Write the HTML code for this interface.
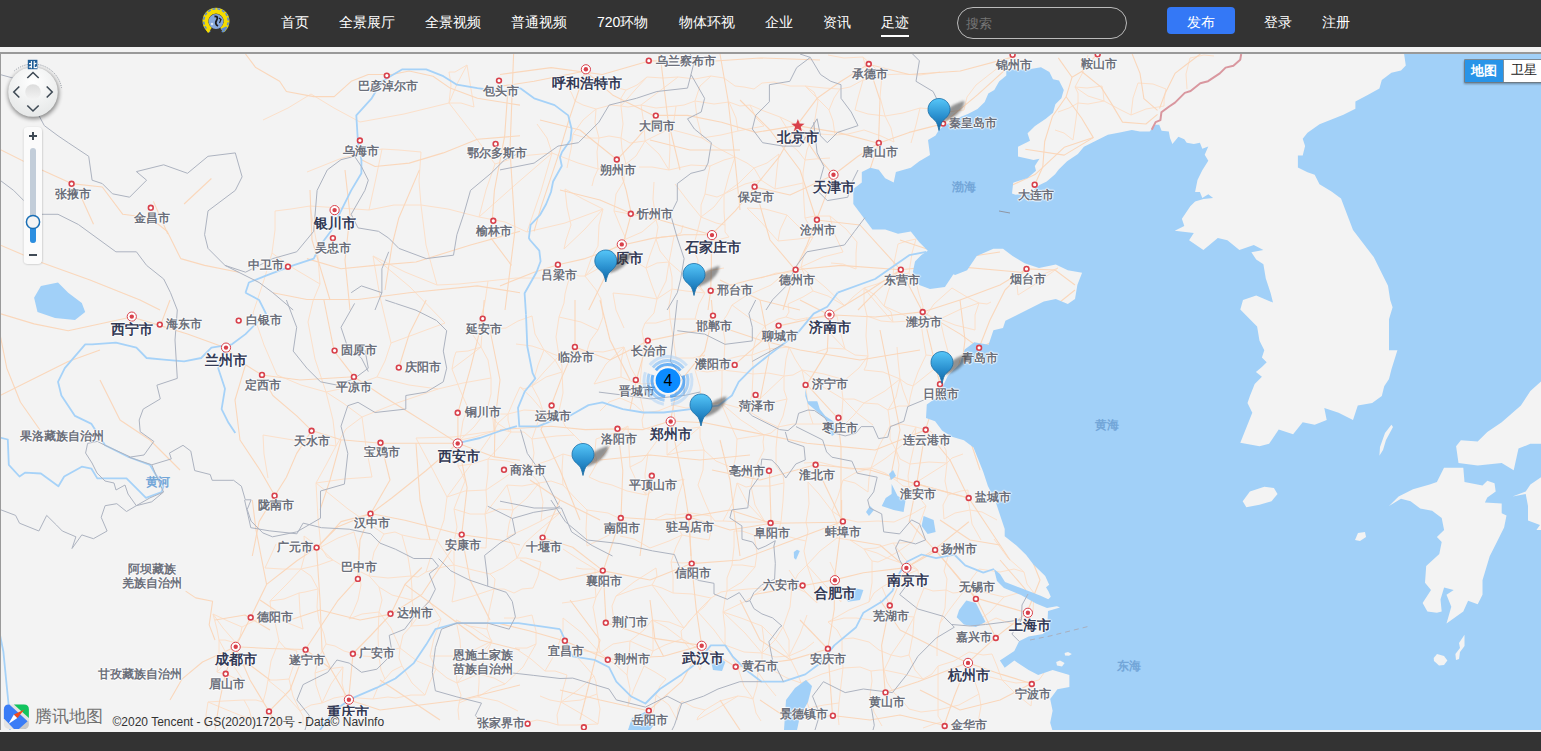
<!DOCTYPE html>
<html><head><meta charset="utf-8"><style>
*{margin:0;padding:0;box-sizing:border-box}
html,body{width:1541px;height:751px;overflow:hidden;background:#333;font-family:"Liberation Sans",sans-serif}
#hdr{position:absolute;left:0;top:0;width:1541px;height:47px;background:#333}
.nav{position:absolute;top:15px;font-size:14px;line-height:14px;color:#fff;white-space:nowrap}
#strip{position:absolute;left:0;top:47px;width:1541px;height:5px;background:#f2f2f2}
#gline{position:absolute;left:0;top:52px;width:1541px;height:2px;background:#999}
#map{position:absolute;left:0;top:54px;width:1541px;height:676px;background:#f3f3f3;overflow:hidden}
#wline{position:absolute;left:0;top:730px;width:1541px;height:2px;background:#f4f4f4}
svg{position:absolute;left:0;top:-54px}
.l{position:absolute;font-size:12px;line-height:12px;font-weight:bold;color:#6c707b;white-space:nowrap;text-shadow:1px 0 1px rgba(255,255,255,.9),-1px 0 1px rgba(255,255,255,.9),0 1px 1px rgba(255,255,255,.9),0 -1px 1px rgba(255,255,255,.9)}
.c{position:absolute;font-size:14px;line-height:14px;font-weight:bold;color:#333a55;white-space:nowrap;text-shadow:1px 0 1px rgba(255,255,255,.9),-1px 0 1px rgba(255,255,255,.9),0 1px 1px rgba(255,255,255,.9),0 -1px 1px rgba(255,255,255,.9)}
.r{position:absolute;font-size:12px;line-height:12px;font-weight:bold;color:#6c707b;white-space:nowrap;text-shadow:1px 0 1px rgba(255,255,255,.9),-1px 0 1px rgba(255,255,255,.9),0 1px 1px rgba(255,255,255,.9),0 -1px 1px rgba(255,255,255,.9)}
.s{position:absolute;font-size:12px;line-height:12px;font-weight:bold;color:#73a6d8;white-space:nowrap}
</style></head><body>
<div id="hdr">

<svg style="position:absolute;left:0;top:0" width="260" height="47" viewBox="0 0 260 47"><path d="M210.2,30.1 A10.6,10.6 0 1 1 221.8,30.1" fill="none" stroke="#f5dc00" stroke-width="5.8"/><path d="M210.2,31.9 A12.3,12.3 0 1 1 221.8,31.9" fill="none" stroke="#5b8ad6" stroke-width="1.6" stroke-dasharray="3 1.8"/><circle cx="216" cy="21.5" r="7.4" fill="#86a8dc"/><path d="M214.5,16.5 Q219,16 216.5,20.5 Q214.5,24 218,26" fill="none" stroke="#1a1a1a" stroke-width="1.8"/><path d="M219,18 L221,19.5 L219.5,23" fill="none" stroke="#222" stroke-width="1.2"/><circle cx="212" cy="24" r="1.3" fill="#d8e4f2"/><path d="M220.5,29 L226,26.5 L225,32 Z" fill="#5b8ad6"/><path d="M205,28 L210.5,30.5 L208,33 Z" fill="#f5dc00"/></svg>
<div class="nav" style="left:281px">首页</div>
<div class="nav" style="left:339px">全景展厅</div>
<div class="nav" style="left:425px">全景视频</div>
<div class="nav" style="left:511px">普通视频</div>
<div class="nav" style="left:597px">720环物</div>
<div class="nav" style="left:679px">物体环视</div>
<div class="nav" style="left:765px">企业</div>
<div class="nav" style="left:823px">资讯</div>
<div class="nav" style="left:881px">足迹</div>
<div class="nav" style="left:1264px">登录</div>
<div class="nav" style="left:1322px">注册</div>
<div style="position:absolute;left:881px;top:35px;width:28px;height:2px;background:#fff"></div>
<div style="position:absolute;left:957px;top:7px;width:170px;height:32px;border:1px solid #bbb;border-radius:16px"></div>
<div style="position:absolute;left:966px;top:17px;font-size:13px;line-height:13px;color:#777">搜索</div>
<div style="position:absolute;left:1167px;top:7px;width:68px;height:27px;background:#3478f6;border-radius:4px"></div>
<div class="nav" style="left:1187px;top:15px">发布</div>
</div><div id="strip"></div><div id="gline"></div>
<div id="map">
<svg width="1541" height="751" viewBox="0 0 1541 751"><g fill="none" stroke="#fce0ca" stroke-width="1" stroke-linejoin="round"><polyline points="213,614 228,621 242,627"/><polyline points="213,614 217,629 219,640"/><polyline points="213,614 223,628 236,643"/><polyline points="219,640 225,640 236,643"/><polyline points="219,640 219,656 217,672"/><polyline points="219,640 231,662 245,683"/><polyline points="217,672 228,675 245,683"/><polyline points="217,672 228,660 236,643"/><polyline points="208,702 224,701 244,700"/><polyline points="208,702 206,715 207,728"/><polyline points="208,702 232,712 252,720"/><polyline points="242,627 256,620 274,617"/><polyline points="242,627 240,637 236,643"/><polyline points="244,700 256,700 263,702"/><polyline points="244,700 249,709 252,720"/><polyline points="263,120 288,108 311,94"/><polyline points="275,211 291,209 310,206"/><polyline points="275,211 275,230 272,253"/><polyline points="272,253 293,268 320,284"/><polyline points="272,253 264,280 253,313"/><polyline points="253,313 264,345 277,375"/><polyline points="277,375 301,385 326,392"/><polyline points="263,435 299,441 336,446"/><polyline points="263,435 264,454 268,478"/><polyline points="276,544 272,553 265,568"/><polyline points="265,568 282,569 301,569"/><polyline points="270,601 284,599 299,593"/><polyline points="270,601 271,610 274,617"/><polyline points="270,601 287,584 301,569"/><polyline points="274,617 288,623 303,629"/><polyline points="274,617 276,627 279,641"/><polyline points="279,641 285,648 297,651"/><polyline points="279,641 271,661 268,680"/><polyline points="268,680 277,680 289,679"/><polyline points="268,680 266,691 263,702"/><polyline points="268,680 284,693 300,711"/><polyline points="304,536 305,554 301,569"/><polyline points="304,536 320,548 333,560"/><polyline points="301,569 319,565 333,560"/><polyline points="301,569 311,576 318,589"/><polyline points="299,593 305,592 318,589"/><polyline points="299,593 300,613 303,629"/><polyline points="297,651 294,664 289,679"/><polyline points="289,679 293,696 300,711"/><polyline points="300,711 311,705 322,703"/><polyline points="300,711 303,716 303,725"/><polyline points="311,94 334,108 360,122"/><polyline points="307,172 342,158 382,149"/><polyline points="310,206 340,208 369,210"/><polyline points="310,206 317,245 320,284"/><polyline points="320,284 313,301 308,322"/><polyline points="308,322 315,359 326,392"/><polyline points="326,392 349,387 377,377"/><polyline points="326,392 333,420 336,446"/><polyline points="326,392 343,403 362,417"/><polyline points="336,446 346,429 362,417"/><polyline points="336,446 326,465 316,483"/><polyline points="316,483 344,479 372,477"/><polyline points="316,483 318,518 321,547"/><polyline points="316,483 348,509 384,534"/><polyline points="321,547 338,538 354,532"/><polyline points="321,547 327,557 333,560"/><polyline points="333,560 346,568 359,572"/><polyline points="318,589 317,607 319,621"/><polyline points="319,621 324,634 326,644"/><polyline points="326,644 335,646 344,651"/><polyline points="326,644 319,657 315,673"/><polyline points="315,673 327,669 343,667"/><polyline points="315,673 316,685 322,703"/><polyline points="322,703 334,698 345,696"/><polyline points="322,703 331,684 343,667"/><polyline points="354,532 359,551 359,572"/><polyline points="359,572 361,572 369,576"/><polyline points="359,572 361,585 358,600"/><polyline points="358,600 353,612 349,619"/><polyline points="349,619 362,614 379,612"/><polyline points="344,651 362,656 379,657"/><polyline points="343,667 342,683 345,696"/><polyline points="345,696 358,698 373,699"/><polyline points="360,122 404,114 449,103"/><polyline points="382,149 399,150 421,152"/><polyline points="382,149 376,178 369,210"/><polyline points="369,210 394,205 421,205"/><polyline points="373,256 405,272 437,285"/><polyline points="373,256 380,297 391,343"/><polyline points="373,256 410,287 445,323"/><polyline points="391,343 418,333 445,323"/><polyline points="391,343 385,361 377,377"/><polyline points="377,377 409,385 438,389"/><polyline points="362,417 366,447 372,477"/><polyline points="362,417 397,403 438,389"/><polyline points="384,534 395,532 402,535"/><polyline points="384,534 374,552 369,576"/><polyline points="369,576 388,578 411,576"/><polyline points="369,576 372,579 379,587"/><polyline points="379,587 392,595 412,600"/><polyline points="379,587 382,600 379,612"/><polyline points="379,612 378,637 379,657"/><polyline points="379,612 391,628 400,648"/><polyline points="379,657 391,650 400,648"/><polyline points="379,657 381,670 385,679"/><polyline points="385,679 392,671 402,666"/><polyline points="385,679 378,687 373,699"/><polyline points="373,699 388,697 396,698"/><polyline points="402,535 421,539 437,540"/><polyline points="402,535 408,557 411,576"/><polyline points="411,576 418,577 426,572"/><polyline points="411,576 412,589 412,600"/><polyline points="412,600 414,612 411,626"/><polyline points="411,626 428,625 441,619"/><polyline points="411,626 403,635 400,648"/><polyline points="411,626 422,611 429,600"/><polyline points="400,648 399,658 402,666"/><polyline points="400,648 417,661 436,669"/><polyline points="402,666 412,683 425,695"/><polyline points="396,698 411,695 425,695"/><polyline points="449,72 455,72 467,65"/><polyline points="449,72 451,85 449,103"/><polyline points="449,103 461,103 474,107"/><polyline points="449,103 473,134 495,164"/><polyline points="449,103 457,84 467,65"/><polyline points="421,152 419,181 421,205"/><polyline points="421,205 448,209 479,217"/><polyline points="421,205 426,245 437,285"/><polyline points="437,285 459,284 488,281"/><polyline points="438,389 463,383 491,378"/><polyline points="416,438 453,437 494,431"/><polyline points="416,438 433,470 447,497"/><polyline points="447,497 465,491 486,490"/><polyline points="447,497 444,520 437,540"/><polyline points="447,497 472,463 494,431"/><polyline points="437,540 430,559 426,572"/><polyline points="437,540 447,555 454,565"/><polyline points="426,572 443,567 454,565"/><polyline points="429,600 435,610 441,619"/><polyline points="441,619 434,638 430,656"/><polyline points="430,656 447,656 461,656"/><polyline points="430,656 432,660 436,669"/><polyline points="436,669 447,678 457,683"/><polyline points="436,669 429,684 425,695"/><polyline points="468,327 473,328 479,325"/><polyline points="468,327 473,335 481,347"/><polyline points="456,352 468,351 481,347"/><polyline points="456,352 454,358 452,369"/><polyline points="452,369 460,390 468,408"/><polyline points="452,369 468,357 481,347"/><polyline points="468,408 476,408 487,410"/><polyline points="468,408 463,421 460,440"/><polyline points="460,440 475,437 494,431"/><polyline points="460,440 458,452 458,466"/><polyline points="460,440 474,427 487,410"/><polyline points="458,466 472,464 488,459"/><polyline points="458,466 461,471 465,481"/><polyline points="465,481 459,496 454,509"/><polyline points="454,509 470,514 485,514"/><polyline points="454,509 457,527 454,542"/><polyline points="454,542 467,547 486,548"/><polyline points="454,542 454,554 454,565"/><polyline points="454,565 473,570 490,574"/><polyline points="454,565 455,583 452,602"/><polyline points="452,602 473,596 494,589"/><polyline points="456,620 469,626 487,629"/><polyline points="456,620 460,640 461,656"/><polyline points="456,620 473,628 492,641"/><polyline points="461,656 474,650 492,641"/><polyline points="461,656 456,670 457,683"/><polyline points="457,683 469,678 479,674"/><polyline points="457,683 461,695 459,703"/><polyline points="457,683 474,662 492,641"/><polyline points="459,703 471,698 478,697"/><polyline points="459,703 458,710 459,720"/><polyline points="467,65 470,83 474,107"/><polyline points="495,164 521,156 552,153"/><polyline points="495,164 486,190 479,217"/><polyline points="479,217 505,222 527,232"/><polyline points="479,217 515,185 552,153"/><polyline points="488,281 516,278 543,278"/><polyline points="488,281 485,302 479,325"/><polyline points="479,325 492,329 506,328"/><polyline points="479,325 482,333 481,347"/><polyline points="481,347 488,360 491,378"/><polyline points="491,378 491,394 487,410"/><polyline points="487,410 496,414 508,414"/><polyline points="487,410 493,419 494,431"/><polyline points="487,410 497,423 511,432"/><polyline points="494,431 503,430 511,432"/><polyline points="494,431 498,423 508,414"/><polyline points="488,459 507,461 522,465"/><polyline points="488,459 488,473 486,490"/><polyline points="488,459 502,444 511,432"/><polyline points="486,490 487,505 485,514"/><polyline points="486,490 504,478 522,465"/><polyline points="485,514 499,509 513,510"/><polyline points="485,514 487,531 486,548"/><polyline points="485,514 498,497 507,485"/><polyline points="490,574 503,568 517,558"/><polyline points="490,574 495,579 494,589"/><polyline points="494,589 504,589 514,593"/><polyline points="494,589 489,612 487,629"/><polyline points="487,629 490,638 492,641"/><polyline points="492,641 485,657 479,674"/><polyline points="479,674 494,678 505,684"/><polyline points="479,674 479,683 478,697"/><polyline points="478,697 498,701 518,711"/><polyline points="478,697 492,688 505,684"/><polyline points="506,328 518,321 532,316"/><polyline points="516,344 532,346 544,350"/><polyline points="520,387 524,389 532,386"/><polyline points="520,387 514,400 508,414"/><polyline points="520,387 531,397 543,411"/><polyline points="508,414 524,410 543,411"/><polyline points="508,414 508,420 511,432"/><polyline points="511,432 524,432 532,439"/><polyline points="522,465 528,464 532,466"/><polyline points="522,465 529,471 539,483"/><polyline points="507,485 522,486 539,483"/><polyline points="507,485 510,496 513,510"/><polyline points="513,510 509,524 507,537"/><polyline points="513,510 527,498 539,483"/><polyline points="507,537 514,547 517,558"/><polyline points="507,537 527,528 541,521"/><polyline points="517,558 526,558 541,562"/><polyline points="517,558 525,543 536,533"/><polyline points="514,593 522,589 533,588"/><polyline points="504,618 518,618 532,615"/><polyline points="515,648 527,648 536,644"/><polyline points="515,648 531,659 545,671"/><polyline points="505,684 523,667 536,644"/><polyline points="506,725 521,724 537,720"/><polyline points="537,124 547,138 552,153"/><polyline points="552,153 578,163 598,169"/><polyline points="552,153 541,191 527,232"/><polyline points="527,232 565,223 603,209"/><polyline points="532,316 535,334 544,350"/><polyline points="544,350 553,354 559,356"/><polyline points="544,350 538,365 532,386"/><polyline points="544,350 555,360 562,372"/><polyline points="532,386 546,377 562,372"/><polyline points="532,386 539,399 543,411"/><polyline points="532,386 544,372 559,356"/><polyline points="543,411 552,413 559,411"/><polyline points="543,411 538,422 532,439"/><polyline points="532,439 556,436 574,435"/><polyline points="532,439 534,453 532,466"/><polyline points="532,466 550,460 563,454"/><polyline points="539,483 551,481 563,485"/><polyline points="539,483 543,502 541,521"/><polyline points="541,521 548,517 561,512"/><polyline points="536,533 549,522 561,512"/><polyline points="541,562 538,576 533,588"/><polyline points="532,615 536,631 536,644"/><polyline points="545,671 555,671 567,675"/><polyline points="545,671 552,659 558,646"/><polyline points="540,696 550,700 561,702"/><polyline points="537,720 548,722 558,725"/><polyline points="561,81 571,92 575,101"/><polyline points="575,101 583,105 596,109"/><polyline points="573,134 586,138 599,138"/><polyline points="573,134 571,149 567,168"/><polyline points="573,134 583,120 596,109"/><polyline points="565,189 567,207 571,225"/><polyline points="565,189 583,199 603,209"/><polyline points="571,225 566,240 564,249"/><polyline points="564,249 585,229 603,209"/><polyline points="571,273 579,276 585,276"/><polyline points="571,273 567,286 565,294"/><polyline points="565,294 564,303 559,317"/><polyline points="559,317 581,322 598,330"/><polyline points="559,317 556,337 559,356"/><polyline points="559,356 575,351 587,351"/><polyline points="559,356 562,366 562,372"/><polyline points="562,372 563,393 559,411"/><polyline points="559,411 565,426 574,435"/><polyline points="574,435 585,446 597,463"/><polyline points="563,454 582,459 597,463"/><polyline points="563,454 562,470 563,485"/><polyline points="563,485 576,499 587,510"/><polyline points="563,549 580,560 595,569"/><polyline points="576,568 583,569 595,569"/><polyline points="562,603 577,601 596,597"/><polyline points="563,618 563,631 558,646"/><polyline points="563,618 582,633 600,653"/><polyline points="558,646 578,650 600,653"/><polyline points="558,646 578,658 594,676"/><polyline points="567,675 563,689 561,702"/><polyline points="561,702 581,700 597,694"/><polyline points="561,702 557,715 558,725"/><polyline points="561,702 580,713 598,724"/><polyline points="561,702 578,690 594,676"/><polyline points="558,725 577,725 598,724"/><polyline points="590,76 610,86 626,90"/><polyline points="596,109 611,105 621,106"/><polyline points="596,109 595,123 599,138"/><polyline points="599,138 609,136 621,138"/><polyline points="599,138 597,152 598,169"/><polyline points="598,169 610,168 626,164"/><polyline points="598,169 594,178 592,186"/><polyline points="603,209 599,225 598,246"/><polyline points="598,246 591,259 585,276"/><polyline points="585,276 601,267 622,261"/><polyline points="585,276 596,290 601,299"/><polyline points="585,276 603,256 626,239"/><polyline points="601,299 603,317 598,330"/><polyline points="598,330 590,341 587,351"/><polyline points="587,351 603,352 624,347"/><polyline points="594,384 609,380 621,377"/><polyline points="594,384 606,364 624,347"/><polyline points="600,411 609,402 620,398"/><polyline points="596,439 614,433 628,426"/><polyline points="596,439 595,452 597,463"/><polyline points="597,463 592,472 589,477"/><polyline points="597,463 613,442 628,426"/><polyline points="589,477 600,482 612,485"/><polyline points="587,510 608,513 627,522"/><polyline points="587,510 586,529 587,546"/><polyline points="587,546 609,535 627,522"/><polyline points="595,569 604,575 616,575"/><polyline points="595,569 595,585 596,597"/><polyline points="596,597 593,607 594,612"/><polyline points="596,597 603,585 616,575"/><polyline points="594,612 598,635 600,653"/><polyline points="600,653 613,644 630,641"/><polyline points="600,653 616,665 627,675"/><polyline points="594,676 596,682 597,694"/><polyline points="597,694 600,709 598,724"/><polyline points="626,90 637,85 647,77"/><polyline points="626,90 621,98 621,106"/><polyline points="621,106 628,107 641,105"/><polyline points="621,106 623,124 621,138"/><polyline points="621,106 635,90 647,77"/><polyline points="621,138 630,143 645,141"/><polyline points="621,138 622,149 626,164"/><polyline points="626,164 624,171 624,181"/><polyline points="626,164 636,156 645,141"/><polyline points="624,181 616,194 614,211"/><polyline points="614,211 635,215 656,220"/><polyline points="614,211 621,228 626,239"/><polyline points="626,239 642,232 656,220"/><polyline points="622,261 636,262 646,268"/><polyline points="613,293 634,295 657,299"/><polyline points="613,293 616,310 624,328"/><polyline points="624,347 621,362 621,377"/><polyline points="624,347 631,368 640,384"/><polyline points="621,377 633,382 640,384"/><polyline points="620,398 634,404 644,413"/><polyline points="628,426 629,448 630,467"/><polyline points="630,467 642,461 648,453"/><polyline points="630,467 636,480 646,495"/><polyline points="612,485 627,491 646,495"/><polyline points="620,536 634,539 650,548"/><polyline points="616,596 635,589 652,585"/><polyline points="616,596 612,606 614,621"/><polyline points="616,596 634,582 656,568"/><polyline points="630,641 639,645 653,651"/><polyline points="630,641 629,658 627,675"/><polyline points="630,641 644,630 652,620"/><polyline points="627,675 630,689 628,706"/><polyline points="628,706 634,689 644,666"/><polyline points="647,77 663,78 678,77"/><polyline points="641,105 656,108 676,106"/><polyline points="641,105 644,124 645,141"/><polyline points="641,105 657,93 678,77"/><polyline points="645,141 659,134 669,129"/><polyline points="645,141 659,154 669,170"/><polyline points="639,167 652,167 669,170"/><polyline points="654,182 653,199 656,220"/><polyline points="656,220 658,227 656,239"/><polyline points="656,239 662,237 674,236"/><polyline points="656,239 650,255 646,268"/><polyline points="656,239 660,251 669,262"/><polyline points="646,268 657,263 669,262"/><polyline points="646,268 651,283 657,299"/><polyline points="657,299 663,295 672,289"/><polyline points="657,299 654,313 645,323"/><polyline points="657,299 666,281 669,262"/><polyline points="645,323 656,323 670,319"/><polyline points="645,323 642,331 644,342"/><polyline points="644,342 642,362 640,384"/><polyline points="640,384 658,383 680,376"/><polyline points="640,384 640,396 644,413"/><polyline points="644,413 658,411 673,405"/><polyline points="644,413 642,420 643,428"/><polyline points="643,428 660,431 673,429"/><polyline points="648,453 645,474 646,495"/><polyline points="648,453 659,438 673,429"/><polyline points="646,495 663,485 684,479"/><polyline points="655,519 666,514 675,515"/><polyline points="650,548 669,541 682,535"/><polyline points="656,568 657,576 652,585"/><polyline points="652,585 662,588 673,593"/><polyline points="652,585 667,605 684,628"/><polyline points="652,620 669,622 684,628"/><polyline points="652,620 653,637 653,651"/><polyline points="652,620 666,627 682,639"/><polyline points="653,651 665,645 682,639"/><polyline points="653,651 651,656 644,666"/><polyline points="644,666 655,672 666,679"/><polyline points="656,695 654,710 647,726"/><polyline points="656,695 669,705 677,720"/><polyline points="656,695 660,686 666,679"/><polyline points="678,77 695,79 711,76"/><polyline points="676,106 684,105 695,101"/><polyline points="676,106 674,120 669,129"/><polyline points="669,129 688,134 702,138"/><polyline points="669,129 670,148 669,170"/><polyline points="669,170 691,165 710,166"/><polyline points="675,184 688,201 701,217"/><polyline points="683,225 681,233 674,236"/><polyline points="674,236 671,252 669,262"/><polyline points="669,262 672,277 672,289"/><polyline points="669,262 685,276 705,293"/><polyline points="672,289 686,291 705,293"/><polyline points="672,289 669,305 670,319"/><polyline points="670,319 684,319 695,319"/><polyline points="670,319 673,336 676,358"/><polyline points="676,358 693,358 705,355"/><polyline points="673,405 686,408 702,407"/><polyline points="673,405 675,419 673,429"/><polyline points="673,429 686,429 700,427"/><polyline points="673,429 667,439 667,455"/><polyline points="667,455 684,451 704,450"/><polyline points="667,455 681,443 700,427"/><polyline points="684,479 678,497 675,515"/><polyline points="675,515 691,513 711,516"/><polyline points="675,515 676,523 682,535"/><polyline points="682,535 697,538 709,540"/><polyline points="682,535 676,547 671,562"/><polyline points="671,562 682,563 697,562"/><polyline points="671,562 673,576 673,593"/><polyline points="673,593 692,594 711,598"/><polyline points="684,628 689,621 698,612"/><polyline points="684,628 681,631 682,639"/><polyline points="684,628 698,611 711,598"/><polyline points="682,639 692,645 702,651"/><polyline points="682,639 693,653 700,670"/><polyline points="682,701 693,707 705,710"/><polyline points="682,701 678,709 677,720"/><polyline points="711,76 724,78 735,86"/><polyline points="711,76 700,86 695,101"/><polyline points="695,101 714,104 729,102"/><polyline points="695,101 697,118 702,138"/><polyline points="702,138 721,135 738,131"/><polyline points="702,138 716,147 735,157"/><polyline points="710,166 724,160 735,157"/><polyline points="710,166 707,181 705,194"/><polyline points="705,194 717,197 724,194"/><polyline points="705,194 701,205 701,217"/><polyline points="701,217 716,223 725,225"/><polyline points="701,217 697,233 693,248"/><polyline points="701,217 714,207 724,194"/><polyline points="693,248 709,242 729,237"/><polyline points="693,248 698,260 697,278"/><polyline points="697,278 708,271 724,268"/><polyline points="697,278 701,288 705,293"/><polyline points="705,293 699,304 695,319"/><polyline points="695,319 707,322 722,322"/><polyline points="705,355 698,362 695,370"/><polyline points="695,370 707,372 722,370"/><polyline points="695,370 700,387 702,407"/><polyline points="702,407 715,403 721,403"/><polyline points="700,427 700,438 704,450"/><polyline points="704,450 716,461 733,468"/><polyline points="704,450 703,470 698,485"/><polyline points="698,485 704,500 711,516"/><polyline points="711,516 715,521 723,521"/><polyline points="711,516 711,530 709,540"/><polyline points="711,598 721,592 727,591"/><polyline points="711,598 704,607 698,612"/><polyline points="698,612 714,630 725,645"/><polyline points="702,651 703,661 700,670"/><polyline points="705,710 720,701 738,696"/><polyline points="705,710 698,717 697,720"/><polyline points="697,720 715,710 738,696"/><polyline points="735,86 744,87 754,89"/><polyline points="729,102 740,106 750,105"/><polyline points="729,102 736,118 738,131"/><polyline points="738,131 748,129 764,126"/><polyline points="735,157 747,163 754,168"/><polyline points="735,157 729,175 724,194"/><polyline points="724,194 745,184 761,180"/><polyline points="724,194 724,211 725,225"/><polyline points="724,194 739,183 754,168"/><polyline points="725,225 725,232 729,237"/><polyline points="732,305 744,297 753,293"/><polyline points="732,305 727,315 722,322"/><polyline points="732,305 751,319 765,326"/><polyline points="722,322 725,341 724,360"/><polyline points="724,360 740,356 752,355"/><polyline points="724,360 723,367 722,370"/><polyline points="722,370 740,372 753,374"/><polyline points="722,370 722,388 721,403"/><polyline points="721,403 732,406 747,410"/><polyline points="721,403 728,419 737,439"/><polyline points="721,403 741,420 764,435"/><polyline points="737,439 749,437 764,435"/><polyline points="737,439 736,456 733,468"/><polyline points="737,483 746,487 751,486"/><polyline points="737,483 733,502 723,521"/><polyline points="737,483 748,504 765,522"/><polyline points="723,521 744,522 765,522"/><polyline points="734,531 742,531 754,535"/><polyline points="734,531 734,547 732,565"/><polyline points="732,565 742,565 755,567"/><polyline points="732,565 727,578 727,591"/><polyline points="727,591 748,589 764,588"/><polyline points="727,591 725,599 723,612"/><polyline points="727,591 742,582 755,567"/><polyline points="723,612 741,618 762,626"/><polyline points="723,612 725,628 725,645"/><polyline points="723,612 745,633 762,653"/><polyline points="723,612 746,601 764,588"/><polyline points="725,645 744,652 762,653"/><polyline points="725,645 731,655 738,668"/><polyline points="738,668 744,686 753,699"/><polyline points="738,696 746,697 753,699"/><polyline points="754,89 762,83 774,82"/><polyline points="750,105 764,111 780,117"/><polyline points="750,105 756,118 764,126"/><polyline points="754,168 767,163 779,154"/><polyline points="754,168 757,173 761,180"/><polyline points="761,180 767,184 775,189"/><polyline points="747,208 765,209 787,215"/><polyline points="747,208 761,222 778,241"/><polyline points="761,278 776,273 785,273"/><polyline points="753,293 771,285 785,273"/><polyline points="765,326 778,319 786,317"/><polyline points="765,326 756,338 752,355"/><polyline points="752,355 768,349 789,347"/><polyline points="752,355 753,367 753,374"/><polyline points="753,374 768,373 784,376"/><polyline points="753,374 752,395 747,410"/><polyline points="747,410 765,404 787,399"/><polyline points="747,410 763,420 778,427"/><polyline points="747,410 765,394 784,376"/><polyline points="764,435 771,433 778,427"/><polyline points="764,435 763,442 764,450"/><polyline points="764,450 756,466 751,486"/><polyline points="751,486 770,486 784,483"/><polyline points="751,486 755,505 765,522"/><polyline points="765,522 774,521 781,522"/><polyline points="754,535 767,534 783,535"/><polyline points="754,535 757,553 755,567"/><polyline points="764,588 779,585 792,586"/><polyline points="762,626 764,641 762,653"/><polyline points="762,626 777,641 789,656"/><polyline points="762,653 775,657 789,656"/><polyline points="762,653 762,660 758,672"/><polyline points="762,653 775,640 783,627"/><polyline points="758,672 757,686 753,699"/><polyline points="758,672 767,685 776,696"/><polyline points="753,699 756,713 761,721"/><polyline points="774,82 790,86 805,86"/><polyline points="780,117 788,130 790,144"/><polyline points="780,117 797,125 812,137"/><polyline points="790,144 804,141 812,137"/><polyline points="790,144 798,151 805,160"/><polyline points="779,154 777,169 775,189"/><polyline points="775,189 789,186 803,183"/><polyline points="787,215 780,230 778,241"/><polyline points="787,215 798,226 813,237"/><polyline points="778,241 798,239 813,237"/><polyline points="785,273 795,271 801,267"/><polyline points="788,304 803,297 813,291"/><polyline points="788,304 789,312 786,317"/><polyline points="786,317 796,320 806,318"/><polyline points="789,347 786,359 784,376"/><polyline points="789,347 795,359 802,370"/><polyline points="784,376 793,375 802,370"/><polyline points="784,376 784,390 787,399"/><polyline points="787,399 783,416 778,427"/><polyline points="778,427 793,424 813,424"/><polyline points="778,427 776,448 776,466"/><polyline points="776,466 783,475 784,483"/><polyline points="784,483 783,501 781,522"/><polyline points="781,522 779,529 783,535"/><polyline points="783,535 797,539 806,541"/><polyline points="789,570 800,586 817,603"/><polyline points="792,586 805,592 817,603"/><polyline points="792,586 790,607 783,627"/><polyline points="792,586 798,574 807,565"/><polyline points="783,627 789,640 789,656"/><polyline points="789,656 805,649 814,642"/><polyline points="789,656 797,672 801,683"/><polyline points="789,656 800,634 807,615"/><polyline points="774,671 787,678 801,683"/><polyline points="805,86 824,88 840,89"/><polyline points="805,86 814,92 818,101"/><polyline points="805,86 815,96 829,110"/><polyline points="818,101 815,119 812,137"/><polyline points="812,137 820,134 835,135"/><polyline points="812,137 807,150 805,160"/><polyline points="805,160 815,159 830,158"/><polyline points="805,160 803,173 803,183"/><polyline points="803,183 804,203 805,218"/><polyline points="805,218 815,216 830,216"/><polyline points="805,218 810,227 813,237"/><polyline points="813,237 805,251 801,267"/><polyline points="801,267 805,276 813,291"/><polyline points="801,267 825,287 845,306"/><polyline points="801,267 823,257 843,252"/><polyline points="813,291 828,296 845,306"/><polyline points="806,318 823,317 837,316"/><polyline points="806,318 828,331 845,349"/><polyline points="816,352 829,348 845,349"/><polyline points="802,370 824,374 845,380"/><polyline points="802,370 806,388 808,406"/><polyline points="802,370 820,385 843,399"/><polyline points="808,406 810,415 813,424"/><polyline points="813,424 829,424 842,427"/><polyline points="804,463 819,462 835,466"/><polyline points="808,482 809,504 806,522"/><polyline points="808,482 819,494 832,511"/><polyline points="806,522 808,531 806,541"/><polyline points="806,541 804,551 807,565"/><polyline points="807,565 814,586 817,603"/><polyline points="807,565 824,584 841,602"/><polyline points="807,565 820,551 837,538"/><polyline points="801,683 822,674 843,668"/><polyline points="801,683 805,696 809,708"/><polyline points="809,708 824,705 839,703"/><polyline points="828,55 844,58 863,57"/><polyline points="840,89 850,87 863,80"/><polyline points="840,89 834,98 829,110"/><polyline points="829,110 833,121 835,135"/><polyline points="835,135 848,134 864,130"/><polyline points="830,216 834,233 843,252"/><polyline points="830,216 846,229 857,242"/><polyline points="831,263 843,264 856,269"/><polyline points="845,306 853,297 864,288"/><polyline points="837,316 840,331 845,349"/><polyline points="845,349 855,355 868,356"/><polyline points="845,380 842,391 843,399"/><polyline points="845,380 859,368 868,356"/><polyline points="843,399 854,399 864,403"/><polyline points="843,399 842,412 842,427"/><polyline points="843,399 857,413 873,425"/><polyline points="842,427 854,415 864,403"/><polyline points="835,466 851,469 871,468"/><polyline points="843,480 855,483 868,492"/><polyline points="843,480 838,496 832,511"/><polyline points="843,480 855,473 871,468"/><polyline points="832,511 844,519 858,522"/><polyline points="832,511 837,523 837,538"/><polyline points="837,538 850,540 864,549"/><polyline points="830,562 838,579 841,602"/><polyline points="828,622 844,618 856,618"/><polyline points="828,622 837,630 842,639"/><polyline points="828,622 849,610 869,602"/><polyline points="842,639 853,638 869,642"/><polyline points="842,639 842,654 843,668"/><polyline points="843,668 860,667 871,671"/><polyline points="843,668 841,685 839,703"/><polyline points="839,703 838,715 839,725"/><polyline points="863,57 866,68 863,80"/><polyline points="863,57 873,66 882,75"/><polyline points="863,80 872,79 882,75"/><polyline points="863,80 858,98 855,110"/><polyline points="855,110 868,114 885,116"/><polyline points="864,130 881,136 894,142"/><polyline points="857,242 856,253 856,269"/><polyline points="864,288 875,295 884,306"/><polyline points="864,288 864,303 867,316"/><polyline points="864,288 879,306 893,322"/><polyline points="864,288 877,284 893,277"/><polyline points="867,316 881,321 893,322"/><polyline points="867,316 866,336 868,356"/><polyline points="868,356 866,366 864,370"/><polyline points="864,370 883,372 900,379"/><polyline points="864,403 878,404 888,410"/><polyline points="864,403 885,391 900,379"/><polyline points="871,468 886,458 896,450"/><polyline points="871,468 869,478 868,492"/><polyline points="871,468 885,473 897,481"/><polyline points="871,468 879,446 890,426"/><polyline points="858,522 878,521 894,522"/><polyline points="864,549 876,548 893,543"/><polyline points="864,549 869,557 872,561"/><polyline points="864,549 877,553 887,558"/><polyline points="872,561 878,562 887,558"/><polyline points="872,561 872,583 869,602"/><polyline points="869,602 874,593 882,587"/><polyline points="856,618 872,620 893,620"/><polyline points="869,642 879,650 891,655"/><polyline points="871,671 880,670 884,670"/><polyline points="871,671 872,681 870,695"/><polyline points="870,695 874,712 882,726"/><polyline points="882,75 901,74 920,75"/><polyline points="882,75 880,97 885,116"/><polyline points="885,116 903,113 920,108"/><polyline points="885,116 891,128 894,142"/><polyline points="898,244 907,241 916,239"/><polyline points="898,244 894,263 893,277"/><polyline points="893,277 899,275 909,273"/><polyline points="893,277 888,292 884,306"/><polyline points="884,306 891,312 893,322"/><polyline points="884,306 904,315 921,323"/><polyline points="893,322 909,321 921,323"/><polyline points="897,347 898,360 900,379"/><polyline points="900,379 907,384 913,386"/><polyline points="900,379 896,397 888,410"/><polyline points="900,379 903,390 909,406"/><polyline points="888,410 899,406 909,406"/><polyline points="888,410 889,417 890,426"/><polyline points="890,426 901,424 916,427"/><polyline points="890,426 890,439 896,450"/><polyline points="896,450 900,459 910,464"/><polyline points="896,450 899,465 897,481"/><polyline points="896,450 909,439 916,427"/><polyline points="897,481 903,486 909,487"/><polyline points="894,522 912,514 926,506"/><polyline points="893,543 901,543 912,542"/><polyline points="893,543 905,559 918,570"/><polyline points="887,558 904,564 918,570"/><polyline points="887,558 899,551 912,542"/><polyline points="882,587 889,604 893,620"/><polyline points="882,587 900,577 918,570"/><polyline points="893,620 903,616 914,617"/><polyline points="891,655 901,657 909,655"/><polyline points="891,655 889,660 884,670"/><polyline points="891,655 904,636 914,617"/><polyline points="884,670 903,674 923,679"/><polyline points="884,670 887,682 894,693"/><polyline points="894,693 901,699 909,709"/><polyline points="920,75 927,74 940,72"/><polyline points="920,108 933,109 942,113"/><polyline points="920,108 916,125 911,143"/><polyline points="916,239 912,253 909,273"/><polyline points="909,273 916,282 919,294"/><polyline points="919,294 923,306 921,323"/><polyline points="921,323 923,337 926,355"/><polyline points="921,323 934,304 952,288"/><polyline points="926,355 935,356 950,359"/><polyline points="926,355 918,372 913,386"/><polyline points="913,386 910,398 909,406"/><polyline points="913,386 933,370 950,359"/><polyline points="916,427 930,431 940,440"/><polyline points="916,427 914,446 910,464"/><polyline points="910,464 929,462 947,463"/><polyline points="910,464 908,476 909,487"/><polyline points="909,487 919,497 926,506"/><polyline points="909,487 928,475 947,463"/><polyline points="926,506 919,526 912,542"/><polyline points="918,570 919,582 924,588"/><polyline points="924,588 933,591 946,590"/><polyline points="924,588 918,603 914,617"/><polyline points="914,617 913,634 909,655"/><polyline points="909,655 915,670 923,679"/><polyline points="923,679 932,674 938,666"/><polyline points="909,709 921,712 938,710"/><polyline points="923,728 934,724 942,722"/><polyline points="942,113 955,111 964,110"/><polyline points="952,288 967,297 979,303"/><polyline points="940,319 955,325 975,330"/><polyline points="940,319 944,337 950,359"/><polyline points="940,319 961,309 979,303"/><polyline points="940,440 946,450 947,463"/><polyline points="947,463 952,458 963,454"/><polyline points="947,463 945,481 948,495"/><polyline points="948,495 961,491 968,490"/><polyline points="948,495 943,505 944,519"/><polyline points="944,519 955,513 970,510"/><polyline points="949,547 948,556 944,571"/><polyline points="944,571 947,579 946,590"/><polyline points="946,590 953,593 963,592"/><polyline points="946,590 945,608 940,623"/><polyline points="940,623 937,642 937,656"/><polyline points="940,623 950,609 963,592"/><polyline points="938,666 938,690 938,710"/><polyline points="938,666 954,661 969,652"/><polyline points="938,710 959,705 979,694"/><polyline points="938,710 938,716 942,722"/><polyline points="976,85 967,97 964,110"/><polyline points="976,85 990,74 1004,63"/><polyline points="979,303 987,304 991,302"/><polyline points="979,303 975,315 975,330"/><polyline points="968,490 968,500 970,510"/><polyline points="970,510 982,512 997,520"/><polyline points="970,510 972,524 981,540"/><polyline points="979,569 986,570 1000,572"/><polyline points="979,569 972,578 963,592"/><polyline points="963,592 983,592 1004,597"/><polyline points="971,626 984,624 996,618"/><polyline points="971,626 990,612 1004,597"/><polyline points="969,652 983,655 992,654"/><polyline points="973,670 986,676 1002,680"/><polyline points="973,670 975,682 979,694"/><polyline points="979,694 981,706 978,723"/><polyline points="994,539 1008,558 1024,572"/><polyline points="1000,572 1014,569 1024,572"/><polyline points="1004,597 1018,593 1034,593"/><polyline points="996,618 1012,624 1027,626"/><polyline points="992,654 997,666 1002,680"/><polyline points="1002,680 1016,683 1030,682"/><polyline points="1002,680 1015,693 1031,706"/><polyline points="1018,279 1039,276 1058,268"/><polyline points="1018,279 1017,285 1018,295"/><polyline points="1018,295 1037,283 1058,268"/><polyline points="1024,572 1027,584 1034,593"/><polyline points="1034,593 1042,600 1046,603"/><polyline points="1034,593 1033,611 1027,626"/><polyline points="1030,682 1039,680 1044,673"/><polyline points="1030,682 1032,696 1031,706"/><polyline points="1058,112 1069,108 1078,103"/><polyline points="1055,130 1064,133 1073,140"/><polyline points="1088,55 1083,72 1075,87"/><polyline points="1075,87 1087,88 1102,86"/><polyline points="1075,87 1078,93 1078,103"/><polyline points="1075,87 1088,96 1104,101"/><polyline points="1078,103 1088,104 1104,101"/><polyline points="1078,103 1076,119 1073,140"/><polyline points="1102,86 1103,91 1104,101"/><polyline points="1104,101 1119,109 1131,115"/><polyline points="1138,83 1153,84 1166,89"/><polyline points="1138,83 1133,98 1131,115"/><polyline points="1131,115 1146,109 1164,106"/><polyline points="1166,89 1164,100 1164,106"/><polyline points="1190,58 1204,55 1214,56"/><polyline points="1190,58 1186,74 1187,89"/></g><g fill="none" stroke="#fad7bb" stroke-width="1.1" stroke-linejoin="round"><polyline points="245.5,54.0 255.7,67.6 279.6,81.3 286.4,91.5 313.7,96.6 334.2,96.6 351.2,81.3 368.3,74.5 392.1,74.5 409.2,71.0 433.0,76.2 450.1,88.1 477.4,98.3 520.0,105.1"/><polyline points="361.4,159.7 375.1,166.5 409.2,163.1 443.3,152.9 477.4,139.2 520.0,135.8"/><polyline points="0.0,149.5 34.1,166.5 71.6,183.6 102.3,187.0 122.8,214.3 150.0,217.7 167.1,231.3 180.7,258.6 204.6,265.4 238.7,272.2"/><polyline points="184.1,204.0 211.4,178.5"/><polyline points="81.5,197.8 93.5,224.2"/><polyline points="153.4,201.4 167.8,234.0"/><polyline points="419.4,169.9 398.9,217.7 392.1,245.0 385.0,290.0"/><polyline points="508.0,88.1 504.7,135.8 494.4,190.4 491.0,238.1 511.5,265.4"/><polyline points="306.9,258.6 341.0,268.8 375.1,265.4 416.0,262.0 470.5,245.0 520.0,231.3"/><polyline points="272.8,292.7 306.9,299.5 358.0,299.5 409.2,292.7 477.4,285.9 520.0,292.7"/><polyline points="310.0,190.0 312.0,240.0 330.0,300.0"/><polyline points="345.0,170.0 350.0,215.0 345.0,260.0 350.0,310.0"/><polyline points="0.0,245.0 40.0,262.0 90.0,280.0 140.0,300.0 160.0,310.0"/><polyline points="585.2,71.0 612.5,94.9 653.4,115.4 687.5,115.4 721.6,122.2 755.7,132.4 796.7,125.6"/><polyline points="655.8,116.1 636.4,139.2 617.0,159.7 626.2,190.4 631.3,213.6 622.8,245.0 605.7,275.6 588.7,310.0"/><polyline points="622.8,245.0 653.4,238.1 684.1,234.7 711.4,234.7"/><polyline points="796.7,125.6 779.6,156.3 754.7,187.0 735.3,210.9 711.4,234.7 711.4,265.4 710.7,290.3 708.0,310.0"/><polyline points="796.7,125.6 817.1,156.3 833.5,175.0"/><polyline points="833.5,175.0 823.9,200.6 816.4,220.0 806.9,245.0 795.3,269.8 783.0,310.0"/><polyline points="796.7,125.6 837.6,132.4 878.5,143.3 909.2,132.4 942.6,123.9 977.4,94.9 1011.5,64.2"/><polyline points="796.7,125.6 817.1,98.3 841.0,81.3 868.3,64.2"/><polyline points="622.8,245.0 585.2,258.6 558.0,264.7 534.1,272.2 500.0,285.9"/><polyline points="500.0,86.4 534.1,81.3 585.2,71.0"/><polyline points="585.2,71.0 568.2,122.2 558.0,156.3 540.9,207.4 534.1,231.3"/><polyline points="900.7,269.8 875.1,292.7 858.0,310.0"/><polyline points="795.3,269.8 841.0,265.4 900.7,269.8 943.3,265.4 1020.0,272.2"/><polyline points="833.5,175.0 858.0,156.3 878.5,143.3"/><polyline points="868.3,64.2 909.2,74.5 960.3,71.0 1011.5,57.4"/><polyline points="500.0,74.5 551.1,67.6 602.3,74.5 650.0,60.8 700.0,62.0 760.0,58.0 820.0,60.0"/><polyline points="513.6,54.0 510.0,150.0 515.0,230.0 505.0,310.0"/><polyline points="720.0,54.0 728.0,100.0 735.0,160.0 740.0,210.0"/><polyline points="660.0,54.0 668.0,120.0 680.0,170.0"/><polyline points="754.7,187.0 790.0,195.0 833.5,175.0"/><polyline points="754.7,187.0 770.0,240.0 795.3,269.8"/><polyline points="710.7,290.3 750.0,280.0 795.3,269.8"/><polyline points="631.3,213.6 660.0,220.0 711.4,234.7"/><polyline points="816.4,220.0 860.0,225.0 900.7,269.8"/><polyline points="740.0,100.0 770.0,130.0 800.0,170.0 816.4,220.0"/><polyline points="878.5,143.3 860.0,200.0 864.9,217.7"/><polyline points="868.3,64.2 880.0,100.0 878.5,143.3"/><polyline points="720.0,280.0 760.0,300.0 800.0,310.0"/><polyline points="560.0,190.0 600.0,200.0 631.3,213.6"/><polyline points="540.0,120.0 580.0,130.0 617.0,159.7"/><polyline points="650.0,140.0 690.0,150.0 740.0,150.0"/><polyline points="0.0,313.6 34.1,323.9 68.2,330.7 131.6,317.0 160.3,325.6 187.5,334.1 225.4,347.7"/><polyline points="225.4,347.7 245.5,364.8 261.9,375.0 272.8,395.5 296.7,415.9 311.7,430.6 341.0,439.8 380.9,443.2 416.0,443.2 457.9,443.2"/><polyline points="457.9,443.2 457.9,412.9 470.5,368.2 482.8,318.8 484.2,300.0"/><polyline points="457.9,443.2 426.2,470.5 392.1,497.8 370.6,513.8 341.0,521.6 317.1,547.9"/><polyline points="353.9,376.7 334.2,351.1 327.3,317.0 323.9,300.0"/><polyline points="353.9,376.7 381.9,395.5 409.2,412.5 436.5,429.6 457.9,443.2"/><polyline points="311.7,430.6 296.7,453.4 286.4,477.3 274.8,495.7 259.1,521.6 252.3,556.0"/><polyline points="398.9,367.5 409.2,334.1 426.2,300.0"/><polyline points="457.9,443.2 494.4,456.9 520.0,460.3"/><polyline points="457.9,443.2 467.1,487.5 461.7,534.6"/><polyline points="0.0,395.5 34.1,378.4 68.2,361.4 100.0,350.0"/><polyline points="0.0,334.1 6.8,368.2 20.5,402.3 40.0,430.0"/><polyline points="261.9,375.0 300.0,380.0 353.9,376.7"/><polyline points="380.9,443.2 390.0,480.0 370.6,513.8"/><polyline points="245.5,364.8 235.0,400.0 240.0,440.0 260.0,470.0 274.8,495.7"/><polyline points="490.0,330.0 500.0,380.0 495.0,420.0 494.4,456.9"/><polyline points="160.3,325.6 170.0,300.0"/><polyline points="100.0,380.0 120.0,420.0 150.0,440.0 180.0,470.0"/><polyline points="341.0,439.8 330.0,480.0 320.0,510.0"/><polyline points="416.0,443.2 420.0,500.0 430.0,540.0"/><polyline points="829.0,314.7 800.0,300.0"/><polyline points="670.5,421.0 643.2,429.6 617.6,428.9 585.2,429.6 551.1,426.2 500.0,429.6"/><polyline points="670.5,421.0 677.3,453.4 684.1,487.5 688.6,516.9 691.0,556.0"/><polyline points="670.5,421.0 704.6,422.8 738.7,429.6 772.8,436.4 806.9,443.2 841.0,446.6 875.1,450.0 925.5,429.9"/><polyline points="670.5,421.0 677.3,385.2 704.6,351.1 712.8,315.7 711.4,300.0"/><polyline points="829.0,314.7 827.3,351.1 806.9,384.6 837.6,418.0 841.0,446.6 841.0,487.5 841.0,521.6"/><polyline points="829.0,314.7 875.1,317.0 922.8,311.9 960.3,334.1 979.1,347.7"/><polyline points="829.0,314.7 778.9,325.9 735.3,364.1"/><polyline points="647.6,340.9 636.4,379.8 630.0,410.0"/><polyline points="575.0,300.0 575.0,347.0 561.4,378.4 551.1,405.7 540.9,429.6"/><polyline points="617.6,428.9 622.8,470.5 621.0,517.5"/><polyline points="652.1,476.0 646.6,504.6 640.0,556.0"/><polyline points="939.9,383.9 925.5,429.9 916.7,484.1 909.2,521.6 934.7,550.0"/><polyline points="769.4,470.5 771.1,523.3 842.7,522.3"/><polyline points="922.8,311.9 939.9,383.9"/><polyline points="815.4,464.7 842.7,522.3"/><polyline points="647.6,340.9 700.0,330.0 712.8,315.7"/><polyline points="575.0,347.0 610.0,360.0 647.6,340.9"/><polyline points="540.9,429.6 560.0,470.0 580.0,520.0"/><polyline points="712.0,470.0 760.0,480.0 815.4,464.7 870.0,470.0 916.7,484.1 968.0,498.0"/><polyline points="688.6,516.9 730.0,510.0 771.1,523.3"/><polyline points="621.0,517.5 660.0,520.0 688.6,516.9"/><polyline points="880.0,330.0 890.0,380.0 900.0,430.0 890.0,480.0"/><polyline points="760.0,300.0 770.0,350.0 760.0,400.0 755.6,394.9"/><polyline points="960.0,360.0 950.0,400.0 970.0,440.0 980.0,470.0"/><polyline points="600.0,300.0 610.0,340.0 630.0,380.0"/><polyline points="720.0,440.0 730.0,480.0 735.0,520.0 740.0,556.0"/><polyline points="530.0,480.0 560.0,500.0 600.0,520.0"/><polyline points="700.0,320.0 760.0,340.0 800.0,350.0 860.0,360.0 920.0,350.0"/><polyline points="600.0,460.0 650.0,455.0 700.0,460.0 750.0,455.0"/><polyline points="235.5,646.8 250.4,617.8 266.6,584.4 296.9,560.7 316.5,547.6 337.4,527.0 370.5,513.5"/><polyline points="235.5,646.8 270.0,648.5 305.4,649.5 330.7,668.7 348.6,699.8"/><polyline points="235.5,646.8 225.4,673.8 219.3,702.5 215.0,730.0"/><polyline points="235.5,646.8 202.5,662.0 182.2,678.8 170.0,700.0"/><polyline points="348.6,699.8 353.0,653.5 371.2,635.0 390.8,614.1 404.9,584.4 421.8,567.5"/><polyline points="357.7,578.6 337.4,601.2 305.4,649.5"/><polyline points="390.8,614.1 421.8,594.5 461.6,534.8"/><polyline points="370.5,513.5 404.9,520.2 461.6,534.8 500.0,540.0 520.0,545.0"/><polyline points="185.6,591.1 195.7,597.9 212.6,601.2 209.2,624.9 215.0,640.0"/><polyline points="235.5,646.8 250.0,680.0 269.0,711.4 280.0,730.0"/><polyline points="305.4,649.5 290.0,690.0 269.0,711.4"/><polyline points="348.6,699.8 380.0,710.0 420.0,705.0 460.0,700.0 500.0,690.0 520.0,685.0"/><polyline points="316.5,547.6 320.0,600.0 322.0,650.0 330.7,668.7"/><polyline points="357.7,578.6 360.0,540.0 370.5,513.5"/><polyline points="404.9,584.4 440.0,610.0 480.0,640.0 520.0,650.0"/><polyline points="215.0,620.0 245.0,615.0 270.0,630.0"/><polyline points="220.0,665.0 250.0,665.0 270.0,680.0"/><polyline points="260.0,600.0 290.0,620.0 320.0,610.0 360.0,620.0 390.8,614.1"/><polyline points="380.0,680.0 410.0,700.0 440.0,720.0"/><polyline points="461.6,534.8 470.0,580.0 490.0,620.0"/><polyline points="252.3,500.0 256.0,530.0 266.6,584.4"/><polyline points="701.7,645.4 696.2,609.0 691.5,563.6 689.0,517.1"/><polyline points="701.7,645.4 652.6,638.1 606.1,622.8 603.2,570.9 572.7,547.2 542.9,537.8"/><polyline points="701.7,645.4 663.5,656.3 607.6,659.2 564.7,641.0 529.1,630.8 500.0,623.6"/><polyline points="701.7,645.4 736.2,667.2 790.7,659.9 827.8,649.0 834.3,609.0 834.3,579.9 863.4,572.7 906.3,567.6 936.1,550.9 976.1,598.1 1026.9,612.7"/><polyline points="834.3,579.9 841.6,521.8 841.6,500.0"/><polyline points="834.3,579.9 802.4,585.8 754.4,594.5"/><polyline points="906.3,567.6 889.6,605.4 881.6,645.4 885.2,692.6"/><polyline points="1026.9,612.7 995.7,637.4 967.7,662.8 1001.5,674.4 1031.3,683.5"/><polyline points="967.7,662.8 954.3,696.2 944.1,725.3"/><polyline points="967.7,662.8 917.9,681.7 885.2,692.6"/><polyline points="906.3,567.6 934.6,549.4 968.8,521.8"/><polyline points="701.7,645.4 681.7,681.7 648.3,710.8"/><polyline points="832.5,715.5 827.8,649.0"/><polyline points="603.2,570.9 621.0,517.5"/><polyline points="542.9,537.8 560.0,500.0"/><polyline points="689.0,517.1 730.0,530.0 771.1,523.3"/><polyline points="936.1,550.9 975.9,598.9"/><polyline points="976.1,598.1 995.7,637.4"/><polyline points="1026.9,612.7 1040.0,580.0 1030.0,555.0"/><polyline points="520.0,560.0 560.0,580.0 603.2,570.9 650.0,580.0 691.5,563.6 740.0,560.0 780.0,545.0 841.6,521.8"/><polyline points="570.0,600.0 600.0,640.0 590.0,680.0 580.0,720.0"/><polyline points="650.0,600.0 655.0,640.0 663.5,656.3"/><polyline points="740.0,600.0 760.0,640.0 790.7,659.9"/><polyline points="760.0,700.0 790.0,720.0 832.5,715.5 870.0,720.0 900.0,715.0 944.1,725.3"/><polyline points="880.0,600.0 900.0,630.0 940.0,650.0 967.7,662.8"/><polyline points="800.0,620.0 827.8,649.0"/><polyline points="720.0,700.0 740.0,730.0"/><polyline points="560.0,690.0 600.0,700.0 648.3,710.8"/><polyline points="920.0,690.0 960.0,710.0 1000.0,700.0 1031.3,683.5"/><polyline points="850.0,540.0 880.0,545.0 906.3,567.6"/><polyline points="1000.0,560.0 1026.0,590.0"/><polyline points="1058.3,57.9 1072.0,77.3 1081.7,71.5 1097.2,54.0"/><polyline points="1072.0,77.3 1066.1,96.8 1052.5,116.2 1044.7,141.5 1042.8,166.8 1035.0,184.3"/><polyline points="1066.1,96.8 1081.7,118.2 1093.3,137.6 1064.2,155.1 1025.3,149.3"/><polyline points="1081.7,71.5 1101.1,87.1 1110.9,102.6 1122.5,122.1 1145.9,124.0 1157.5,114.3"/><polyline points="1132.2,54.0 1140.0,73.4 1143.9,98.7 1157.5,110.4"/><polyline points="1200.3,54.0 1184.8,65.7 1175.0,73.4 1165.3,92.9 1159.5,108.5"/><polyline points="1009.7,186.2 1035.0,174.6 1064.2,147.3 1093.3,137.6"/><polyline points="922.8,311.9 960.0,300.0 1000.0,285.0 1026.5,268.9 1055.0,270.0 1075.0,285.0"/><polyline points="979.1,347.7 990.0,320.0 1005.0,290.0 1026.5,268.9"/><polyline points="829.0,314.7 870.0,290.0 900.7,269.8"/><polyline points="900.7,269.8 922.7,312.0"/><polyline points="979.1,347.7 1020.0,330.0 1050.0,310.0 1075.0,290.0"/><polyline points="925.5,429.9 950.0,460.0 968.7,498.0 990.0,530.0 1010.0,560.0"/><polyline points="916.8,483.7 968.7,498.0"/><polyline points="900.0,240.0 930.0,250.0 960.0,258.0 1000.0,252.0"/><polyline points="960.0,300.0 965.0,340.0 960.0,380.0"/><polyline points="940.0,520.0 970.0,540.0 1000.0,545.0"/></g><polygon points="1404.1,54.0 1541.0,54.0 1541.0,731.0 1052.6,731.0 1050.2,722.8 1052.6,710.8 1050.2,698.9 1057.4,689.3 1069.4,686.9 1069.4,674.9 1052.6,670.1 1038.2,674.9 1028.6,670.1 1014.3,660.5 1004.7,667.7 999.9,660.5 1014.3,650.9 1019.1,641.3 1028.6,636.5 1043.0,634.1 1047.8,626.9 1047.6,620.0 1048.0,611.0 1060.0,607.5 1052.0,604.0 1046.0,601.6 1050.8,596.8 1048.4,591.2 1046.0,587.2 1049.2,584.8 1045.2,576.0 1039.6,570.4 1033.4,564.6 1026.2,555.0 1016.7,545.8 1004.7,536.2 1004.7,529.1 999.9,514.7 995.1,500.3 987.9,485.9 983.1,471.5 978.3,459.5 973.5,447.5 963.9,440.3 951.9,436.8 942.3,430.8 935.1,421.2 926.0,418.0 926.8,404.4 936.0,398.0 942.0,388.0 947.9,375.8 959.9,363.8 964.7,349.5 974.3,342.3 988.6,344.7 993.4,330.3 1003.0,327.9 1005.4,320.7 1015.0,315.9 1029.4,308.7 1043.8,301.5 1055.8,299.1 1067.8,303.9 1075.0,299.1 1077.4,284.7 1082.1,272.7 1067.8,270.3 1055.8,264.4 1039.0,268.0 1024.6,263.2 1012.6,256.0 1003.0,248.8 993.4,248.8 976.7,256.0 967.1,270.3 955.1,275.1 953.4,274.2 944.9,287.0 930.0,289.1 919.3,284.9 912.9,272.1 915.0,261.4 921.4,255.0 927.8,250.8 919.3,242.3 910.8,231.6 898.0,233.7 885.2,229.5 872.4,229.5 866.0,221.0 859.7,212.4 853.3,203.9 853.3,189.0 861.8,182.6 861.8,172.0 870.3,167.7 878.8,169.8 885.2,178.3 893.7,182.6 895.9,172.0 910.8,167.7 919.3,161.3 930.0,154.9 928.0,140.0 935.6,135.5 939.2,129.5 944.0,125.9 956.0,118.7 967.9,113.9 977.5,109.1 984.7,101.9 988.3,93.5 994.3,90.0 999.1,81.6 1006.3,75.6 1006.3,70.8 1011.1,69.6 1027.9,69.6 1041.0,67.2 1049.4,72.0 1053.0,79.2 1059.0,80.4 1063.8,90.0 1061.4,98.3 1055.4,104.3 1053.0,112.7 1045.8,118.7 1035.0,125.9 1027.9,133.1 1028.8,130.5 1027.6,133.6 1030.0,140.8 1018.0,146.8 1018.0,156.4 1033.6,160.0 1039.5,158.8 1034.8,166.0 1036.0,170.7 1027.6,177.9 1013.2,182.7 1012.0,193.5 1015.6,194.7 1030.0,193.0 1039.5,185.1 1046.7,181.5 1055.1,174.3 1058.7,169.5 1067.1,161.2 1077.9,154.0 1083.9,146.8 1095.9,140.8 1107.9,134.8 1119.8,132.4 1131.8,130.0 1140.0,131.4 1149.6,131.4 1155.6,124.8 1159.2,124.8 1161.6,130.8 1168.8,131.4 1170.0,138.0 1172.4,144.0 1178.4,136.8 1184.3,139.2 1186.7,142.8 1193.9,144.0 1199.9,142.8 1202.3,148.8 1208.3,146.4 1204.7,154.8 1208.3,160.7 1202.3,170.3 1197.5,179.9 1195.1,191.9 1199.9,191.9 1202.3,197.9 1208.3,194.3 1213.1,197.9 1203.5,199.1 1195.1,201.5 1190.3,206.3 1181.9,218.7 1184.3,225.9 1174.7,230.7 1193.8,233.1 1189.1,240.3 1203.4,249.9 1217.8,237.9 1227.4,240.3 1239.4,249.9 1253.8,245.1 1263.4,249.9 1251.4,252.3 1256.2,259.5 1263.4,264.3 1265.8,278.6 1270.6,293.0 1273.0,302.6 1256.2,295.4 1243.0,300.0 1240.3,309.6 1249.9,319.2 1257.1,326.4 1259.5,340.8 1264.3,350.3 1261.9,357.5 1266.7,362.3 1261.9,367.1 1255.9,371.9 1261.9,376.7 1254.7,383.9 1249.9,395.9 1247.5,403.1 1252.3,412.7 1247.5,424.7 1242.7,436.7 1240.3,442.7 1259.5,446.2 1269.1,443.8 1278.7,429.5 1293.1,434.3 1302.7,422.3 1314.7,424.7 1326.7,419.9 1324.3,407.9 1338.6,412.7 1353.0,419.9 1357.8,405.5 1372.2,403.1 1381.8,395.9 1384.2,386.3 1389.0,379.1 1391.4,369.5 1397.4,350.3 1389.0,350.3 1389.0,336.0 1389.0,319.2 1392.6,307.2 1390.2,300.0 1388.0,285.8 1373.7,257.1 1353.0,230.0 1341.0,198.6 1331.5,191.5 1319.5,184.3 1314.7,174.7 1307.5,172.3 1297.9,167.5 1297.9,155.5 1302.7,155.5 1305.1,145.9 1302.7,138.7 1307.5,132.7 1319.5,124.3 1331.5,119.5 1343.4,114.7 1355.4,108.7 1355.4,101.5 1368.6,94.4 1379.4,88.4 1381.8,80.0 1391.4,72.8 1401.0,70.4 1405.8,65.6" fill="#a1d0f8"/><polygon points="1541.0,381.5 1530.4,391.1 1520.9,405.5 1501.7,422.3 1487.3,431.9 1477.7,441.5 1460.9,440.3 1456.1,446.2 1458.5,463.0 1477.7,465.4 1501.7,463.0 1513.7,470.2 1518.5,448.6 1530.4,443.8 1541.0,443.8" fill="#f3f3f3"/><polygon points="1444.0,467.8 1463.3,467.8 1464.5,482.0 1482.5,485.6 1487.3,480.8 1494.5,483.2 1495.7,491.6 1487.3,497.6 1484.9,502.4 1501.7,503.6 1501.7,513.2 1506.5,515.6 1504.1,527.5 1496.9,541.9 1489.7,556.3 1482.5,580.3 1482.5,594.7 1477.7,604.3 1468.1,600.7 1463.3,611.4 1446.5,623.4 1451.3,606.7 1446.5,594.7 1453.7,589.9 1444.1,587.5 1440.5,599.5 1441.7,611.4 1436.9,612.7 1427.4,611.4 1422.6,603.1 1431.0,589.9 1425.0,582.7 1426.2,565.9 1439.3,553.9 1441.7,541.9 1436.9,537.1 1444.1,529.9 1441.7,518.0 1432.1,510.8 1420.2,508.4 1410.6,501.2 1401.0,498.8 1389.0,506.0 1398.6,496.4 1413.0,489.2 1429.7,484.4 1436.9,482.0" fill="#f3f3f3"/><polygon points="1541.0,477.2 1530.4,484.4 1525.7,491.6 1512.5,496.4 1525.7,494.0 1528.0,506.0 1528.0,520.4 1540.0,525.1 1536.4,530.0 1541.0,530.0" fill="#f3f3f3"/><polygon points="1242.7,501.2 1249.9,491.6 1264.3,486.8 1273.9,488.0 1277.5,494.0 1271.5,501.2 1259.5,504.8 1246.3,507.2" fill="#f3f3f3"/><polygon points="1391.4,424.7 1393.0,427.0 1386.0,440.0 1383.0,450.0 1379.4,455.8 1380.0,447.0 1385.0,433.0" fill="#f3f3f3"/><polygon points="1433.7,658.0 1437.0,654.0 1444.0,656.0 1447.4,660.5 1444.0,665.0 1439.0,665.6 1434.0,661.0" fill="#f3f3f3"/><polygon points="1464.5,634.8 1464.5,646.0 1460.0,652.0 1459.0,659.0 1456.0,660.0 1455.4,654.0 1460.0,648.0 1459.0,643.0" fill="#f3f3f3"/><polygon points="1355.0,540.0 1358.0,533.0 1365.0,532.0 1366.0,537.0 1360.0,541.0" fill="#f3f3f3"/><polygon points="1064.6,653.0 1068.0,652.0 1071.8,654.0 1069.0,655.7 1065.0,655.5" fill="#f3f3f3"/><polygon points="1056.2,662.0 1060.0,660.5 1064.6,663.0 1062.0,666.5 1057.0,665.5" fill="#f3f3f3"/><g fill="#a1d0f8"><polygon points="40.9,285.9 58.0,282.5 68.2,292.7 81.8,302.9 85.2,312.0 75.0,320.0 55.0,318.0 37.5,312.0 34.1,297.8"/><polygon points="805.3,389.3 808.0,401.3 817.3,401.3 819.9,409.3 825.3,415.9 833.2,421.3 835.9,433.2 831.9,435.9 825.3,418.6 815.9,410.6 808.0,404.0 805.3,396.0"/><polygon points="891.6,484.0 897.6,495.9 905.6,499.9 903.6,511.9 893.6,509.9 881.7,505.9 885.7,497.9 891.6,493.9"/><polygon points="923.6,515.9 933.6,519.9 935.6,531.9 927.6,533.9 921.6,525.9"/><polygon points="793.8,552.0 797.0,549.8 799.8,551.0 796.0,559.8 794.0,558.0"/><polygon points="866.0,512.0 870.0,506.0 874.0,510.0 869.0,516.0"/><polygon points="889.0,474.0 893.0,470.0 896.0,476.0 891.0,480.0"/><polygon points="632.0,718.0 645.0,712.0 656.0,722.0 650.0,730.0 628.0,730.0"/><polygon points="786.0,700.0 795.0,688.0 806.0,680.0 812.0,686.0 808.0,702.0 800.0,716.0 797.0,730.0 784.0,730.0"/><polygon points="841.6,591.0 850.0,587.2 863.4,590.0 860.0,600.0 848.0,601.8"/><polygon points="710.8,660.0 718.0,656.0 725.3,662.0 722.0,671.0 713.0,670.0"/><polygon points="956.7,617.3 959.1,610.1 966.3,600.6 975.9,603.0 980.7,612.5 985.5,622.1 975.9,626.9 963.9,624.5"/><polygon points="994.0,569.0 1000.0,574.0 1005.0,582.0 1022.0,588.5 1040.0,595.5 1050.0,600.0 1058.0,606.0 1047.0,608.0 1036.0,603.5 1021.0,595.0 1004.0,588.0 997.0,581.0"/></g><g fill="none" stroke="#a6d2f8" stroke-width="1.8" stroke-linejoin="round"><polyline points="245.5,292.7 248.9,282.5 266.0,275.6 293.2,265.4 313.7,258.6 320.5,245.0 330.8,231.3 341.0,210.9 351.2,190.4 361.4,173.3 361.4,159.7 358.0,142.7 356.3,115.4 371.7,98.3 381.9,81.3 402.4,69.3 426.2,69.3 443.3,76.2 456.9,84.7 477.4,88.1 501.2,91.5 520.0,88.1"/><polyline points="520.0,88.1 534.1,98.3 554.6,105.1 568.2,115.4 571.6,129.0 570.4,140.0 562.0,152.0 560.0,157.3 561.8,166.0 553.1,181.5 551.0,192.0 546.2,204.0 540.0,215.0 530.6,224.8 528.9,238.0 530.0,240.0 539.3,250.7 540.6,261.3 536.6,272.0 524.6,293.3 526.0,314.6"/><polyline points="837.6,292.7 875.1,279.0 909.2,255.2 926.2,251.8"/><polyline points="245.5,292.7 259.1,300.0 266.0,313.6 245.5,334.1 231.9,344.3 211.4,347.7 201.2,358.0 184.1,361.4 163.7,359.7 146.6,358.0 136.4,347.7 115.9,342.6 92.1,344.3 85.2,344.3 64.8,368.2 58.0,381.8 61.4,395.5 75.0,415.9 91.5,423.9 105.1,445.3 128.5,457.0 149.9,464.8 155.7,474.5 163.5,486.2 161.6,492.0 146.0,497.9 136.3,488.1 126.5,478.4 107.1,478.4 97.3,478.4 91.5,468.7 81.8,466.7 64.2,476.5 58.4,486.2 40.9,473.5 25.3,472.6 19.5,476.5 8.8,464.8 7.8,439.5 0.0,437.5"/><polyline points="225.4,347.7 218.2,368.2 225.0,388.7 221.6,409.1 228.5,422.8 235.3,433.0"/><polyline points="526.0,314.6 527.3,346.5 532.6,373.2 535.3,378.5 524.6,391.8 518.0,407.8 519.3,426.4 537.9,426.4 551.3,421.1 569.9,415.8 588.5,405.1 602.3,402.3 622.8,409.1 643.2,412.5 663.7,412.5 691.0,409.1 718.2,405.7 731.9,395.5 738.7,381.8 752.3,368.2 769.4,354.6 783.0,344.3 796.7,334.1 813.7,313.6 827.3,306.8 837.6,292.7"/><polyline points="457.9,443.2 480.0,438.0 500.0,431.0 517.0,426.2"/><polyline points="350.9,699.1 355.4,696.9 376.9,687.7 395.4,678.5 413.8,663.1 426.2,644.6 435.4,629.2 456.9,623.1 487.7,623.1 518.5,623.1 560.0,629.2"/><polyline points="0.0,635.0 3.4,651.8 6.7,685.6 8.4,702.5 10.0,730.0"/><polyline points="350.9,699.1 335.0,710.0 320.0,730.0"/><polyline points="560.0,629.2 572.7,656.3 594.5,659.9 609.0,667.2 616.3,681.7 630.8,696.2 645.4,703.5 659.9,689.0 681.7,674.4 696.2,663.5 710.8,645.4 725.3,645.4 732.6,656.3 747.1,670.8 761.6,681.7 783.4,681.7 805.3,674.4 819.8,663.5 834.3,645.4 856.1,627.2 863.4,612.7 881.6,601.8 892.5,590.9 899.7,572.7 907.0,561.8 921.5,554.5 936.1,558.1 954.3,554.5 965.2,565.4 983.3,572.7 994.0,569.0"/></g><g fill="none" stroke="#adb3c0" stroke-width="1" stroke-linejoin="round"><polyline points="235.3,152.9 242.1,176.8 235.3,190.4 208.0,210.9 204.6,234.7 208.0,248.4 225.0,265.4 245.5,272.2 272.8,258.6 296.7,251.8 313.7,231.3 317.1,190.4 327.3,169.9 341.0,159.7 354.6,156.3 361.4,166.5 368.3,180.2 364.9,190.4 351.2,214.3 358.0,227.9 378.5,231.3 388.7,238.1 398.9,248.4 426.2,258.6 453.5,255.2 456.9,234.7 463.7,214.3 470.5,190.4 491.0,173.3 504.7,159.7 520.0,152.9"/><polyline points="388.7,251.8 381.9,268.8 381.9,292.7 375.0,310.0"/><polyline points="351.2,292.7 361.4,285.9 381.9,292.7"/><polyline points="225.0,265.4 259.1,282.5 272.8,292.7 293.2,310.0"/><polyline points="0.0,180.2 13.6,190.4 37.5,214.3 58.0,214.3 78.4,224.5 115.9,251.8 136.4,251.8 146.6,265.4 163.7,279.0 170.5,292.7 177.3,310.0"/><polyline points="0.0,74.5 20.0,80.0 44.3,125.6 58.0,135.8 68.2,142.7 88.7,156.3 92.1,180.2 102.3,183.6 112.5,193.8 129.6,197.2 146.6,180.2 136.4,171.6 163.7,164.8 187.5,173.3 208.0,156.3 235.3,152.9"/><polyline points="500.0,169.9 534.1,163.1 558.0,146.1 578.4,142.7 598.9,122.2 609.1,105.1 636.4,98.3 656.9,91.5 687.5,88.1 691.0,74.5 694.4,60.8 690.0,54.0"/><polyline points="691.0,74.5 704.6,98.3 701.2,112.0 687.5,118.8 694.4,129.0 711.4,142.7 708.0,163.1 704.6,169.9 691.0,173.3 677.3,183.6 677.3,200.6 670.5,214.3 677.3,238.1 684.1,258.6 680.7,279.0 677.3,292.7 667.1,310.0"/><polyline points="755.7,115.4 769.4,101.7 769.4,84.7 789.8,81.3 796.7,67.6 810.3,57.4 820.5,74.5 830.8,81.3 841.0,84.7 841.0,98.3 851.2,112.0 858.0,125.6 837.6,132.4 827.3,142.7 820.5,135.8 817.1,118.8 800.1,146.1 783.0,146.1 762.6,142.7 752.3,129.0 755.7,115.4"/><polyline points="813.7,122.2 817.1,152.9 823.9,166.5 817.1,190.4 827.3,200.6 847.8,197.2 851.2,183.6 858.0,170.0"/><polyline points="864.9,217.7 854.6,231.3 844.4,245.0 806.9,251.8 796.7,265.4 786.4,285.9 772.8,299.5 766.0,310.0"/><polyline points="912.6,54.0 919.4,60.8 916.0,81.3 933.1,91.5 936.5,98.3 935.0,110.0"/><polyline points="810.3,57.4 800.0,54.0"/><polyline points="177.3,378.4 156.9,385.2 160.3,398.9 143.2,409.1 139.2,420.0 140.2,431.7 153.8,441.4 144.0,455.0 130.4,457.0 105.1,445.3 97.3,441.4 87.6,443.4 85.6,453.0 92.0,463.0 97.0,473.0 105.0,481.0 114.0,483.0 116.0,490.0 125.0,485.0 128.0,494.0 136.3,505.7"/><polyline points="128.5,457.0 151.8,464.8 155.7,474.5 163.5,492.0 149.9,497.9 136.3,505.7"/><polyline points="151.8,464.8 171.3,458.9 169.4,453.1 183.0,445.3 190.8,451.1 194.7,470.6 210.2,474.5 212.2,480.3 233.6,480.3 241.4,486.2 245.3,499.8 251.1,499.8 247.2,509.5 251.1,521.2 262.8,532.9 272.5,536.8 296.7,531.9 320.5,518.2 320.5,491.0 344.4,484.1 347.8,453.4 341.0,426.2 347.8,405.7 358.0,402.3 375.1,412.5 405.8,409.1 405.8,395.5 426.2,392.1 443.3,381.8 446.7,368.2 443.3,351.1 446.7,330.7 436.5,320.5 416.0,310.2 395.5,303.4 385.3,300.0"/><polyline points="177.3,310.0 175.0,340.0 177.3,378.4"/><polyline points="286.4,300.0 296.7,327.3 293.2,351.1 306.9,368.2 320.5,381.8 337.6,385.2 354.6,378.4 368.3,368.2 365.0,350.0"/><polyline points="354.6,303.4 341.0,327.3 347.8,347.7 361.4,358.0 368.3,371.6"/><polyline points="598.9,392.1 626.2,395.5 650.0,398.9 684.1,395.5 700.0,392.0"/><polyline points="677.3,300.0 673.9,330.7 670.5,361.4 684.0,380.0 684.1,395.5"/><polyline points="677.3,330.7 704.6,334.1 725.0,344.3 752.3,340.9 752.3,327.3 748.9,313.6 755.7,300.0"/><polyline points="752.3,361.4 783.0,344.3"/><polyline points="738.7,402.3 752.3,415.9 779.6,429.6 788.0,430.6 796.0,423.9 798.6,413.3 808.0,410.0 814.6,410.6 825.0,418.0 834.6,433.2 845.2,435.9 855.9,433.2 861.2,426.6 873.2,426.6 878.5,438.6 887.8,437.2 890.5,426.6 903.8,421.3 907.8,406.6 923.8,400.0"/><polyline points="796.0,426.6 822.6,439.9 826.6,451.9 831.9,457.2 851.9,461.2 857.2,473.2 877.2,477.2 873.7,491.9 867.7,499.9 869.7,507.9 881.7,513.9 883.7,531.9 899.6,533.9 911.6,519.9 919.6,523.9 925.6,539.9 915.6,543.9 899.6,539.9 895.6,547.9 899.6,559.8"/><polyline points="785.3,431.9 788.0,441.2 804.0,446.6 805.3,459.9 795.8,464.0 785.8,478.0 777.8,466.0 771.8,460.0 761.8,459.0 759.8,476.0 749.8,490.0 747.8,507.9 731.9,509.9 729.9,517.9 741.9,525.9 742.0,539.3 752.6,542.0 757.9,549.3 765.9,546.0 775.3,540.7 773.9,546.0 775.3,563.3 774.6,579.3 761.9,584.6 753.9,592.6 749.9,600.6 753.9,608.6 761.9,613.9 772.6,617.9 781.9,625.9"/><polyline points="500.0,501.2 534.1,508.0 561.4,508.0 571.6,531.9 592.1,545.5 612.5,556.0"/><polyline points="520.5,429.6 527.3,453.4 544.3,477.3 551.1,491.0 558.0,504.6"/><polyline points="0.0,509.5 15.6,515.4 19.5,523.2 38.9,531.0 46.7,515.4 56.5,525.1 62.3,531.0 75.9,536.8 72.0,548.5 81.8,534.9 93.4,538.7 107.1,531.0 101.2,517.3 105.1,505.7 116.8,503.7 126.5,511.5 136.3,505.7 151.8,501.8 163.5,492.0"/><polyline points="244.6,500.0 250.8,527.7 269.2,530.8 296.9,533.8 303.1,523.1 321.5,527.7 349.2,529.2 370.8,533.8 380.0,543.1 395.4,549.2 413.8,558.5 432.3,558.5 438.5,566.2 429.2,573.8 435.4,589.2 429.2,601.5 413.8,616.9 404.6,629.2 389.2,635.4 392.3,653.8 376.9,669.2 361.5,672.3 349.2,663.1 336.9,660.0 327.7,672.3 303.1,684.6 296.9,700.0 309.2,715.4 305.0,730.0"/><polyline points="438.5,558.5 450.8,570.8 469.2,580.0 487.7,586.2 506.2,592.3 512.3,601.5 515.4,616.9 509.2,629.2 487.7,623.1 456.9,623.1 441.5,629.2 435.4,647.7 432.3,672.3 435.4,690.8 456.9,696.9 481.5,703.1 475.4,715.4 487.7,731.0"/><polyline points="487.7,506.2 512.3,518.5 515.4,533.8 500.0,543.1 484.6,555.4 487.7,580.0 487.7,586.2"/><polyline points="512.3,518.5 533.8,512.3 555.0,509.0 560.0,506.0"/><polyline points="506.2,672.3 533.8,675.4 560.0,678.5"/><polyline points="550.9,500.0 565.4,521.8 587.2,540.0 619.9,543.6 652.6,550.9 674.4,554.5 681.7,572.7 699.3,580.6 714.0,583.3 714.0,594.0 727.3,599.3 739.3,592.6 745.9,601.9 749.9,600.6"/><polyline points="781.9,625.9 779.8,627.2 768.9,641.7 772.5,659.9 779.8,674.4 783.4,681.7"/><polyline points="899.6,559.8 910.6,579.9 899.7,594.5 917.9,609.0 943.3,616.3 954.3,627.2"/><polyline points="954.3,627.2 936.1,638.1 917.9,656.3 907.0,674.4 892.5,692.6 863.4,689.0 845.2,692.6 823.4,681.7 812.5,696.2 819.8,714.4 815.0,730.0"/><polyline points="951.9,624.5 970.0,626.0 985.5,624.5 1004.7,622.1 1021.5,619.7 1022.0,605.0 1028.0,594.0"/><polyline points="1021.5,619.7 1011.9,634.1 1019.1,641.3"/><polyline points="560.0,678.5 572.7,678.1 609.0,689.0 616.3,699.9 645.4,707.1 667.2,696.2 681.7,703.5 703.5,696.2 718.0,689.0 739.8,681.7 761.6,681.7"/><polyline points="681.7,703.5 674.4,725.3 672.0,730.0"/><polyline points="870.7,703.5 874.3,725.3 873.0,730.0"/></g><g fill="none" stroke="#d9979f" stroke-width="2" stroke-linejoin="round"><polyline points="1241.2,54.0 1240.2,59.8 1233.4,65.7 1225.6,67.6 1219.8,73.4 1208.1,81.2 1200.3,83.2 1190.6,91.0 1184.8,92.9 1175.0,102.6 1169.2,106.5 1161.4,112.3 1160.4,120.1 1155.6,122.1 1151.7,129.8"/></g><polyline points="999,211 1010,213" fill="none" stroke="#8f96a3" stroke-width="1"/><polyline points="1030,640 1050,636 1070,631 1090,626" fill="none" stroke="#a9afbd" stroke-width="1" stroke-dasharray="5 4"/><circle cx="71.6" cy="183.8" r="2.4" fill="#fff" stroke="#d8404b" stroke-width="1.6"/><circle cx="150.8" cy="207.8" r="2.4" fill="#fff" stroke="#d8404b" stroke-width="1.6"/><circle cx="386.8" cy="75.6" r="2.4" fill="#fff" stroke="#d8404b" stroke-width="1.6"/><circle cx="359.9" cy="140.5" r="2.4" fill="#fff" stroke="#d8404b" stroke-width="1.6"/><circle cx="332.9" cy="238.1" r="2.4" fill="#fff" stroke="#d8404b" stroke-width="1.6"/><circle cx="288.0" cy="266.7" r="2.4" fill="#fff" stroke="#d8404b" stroke-width="1.6"/><circle cx="499.0" cy="80.6" r="2.4" fill="#fff" stroke="#d8404b" stroke-width="1.6"/><circle cx="495.6" cy="143.9" r="2.4" fill="#fff" stroke="#d8404b" stroke-width="1.6"/><circle cx="648.8" cy="60.7" r="2.4" fill="#fff" stroke="#d8404b" stroke-width="1.6"/><circle cx="655.8" cy="115.6" r="2.4" fill="#fff" stroke="#d8404b" stroke-width="1.6"/><circle cx="616.8" cy="159.5" r="2.4" fill="#fff" stroke="#d8404b" stroke-width="1.6"/><circle cx="630.8" cy="213.8" r="2.4" fill="#fff" stroke="#d8404b" stroke-width="1.6"/><circle cx="493.3" cy="220.8" r="2.4" fill="#fff" stroke="#d8404b" stroke-width="1.6"/><circle cx="557.9" cy="264.7" r="2.4" fill="#fff" stroke="#d8404b" stroke-width="1.6"/><circle cx="710.7" cy="290.7" r="2.4" fill="#fff" stroke="#d8404b" stroke-width="1.6"/><circle cx="754.6" cy="186.8" r="2.4" fill="#fff" stroke="#d8404b" stroke-width="1.6"/><circle cx="868.8" cy="64.0" r="2.4" fill="#fff" stroke="#d8404b" stroke-width="1.6"/><circle cx="878.8" cy="142.9" r="2.4" fill="#fff" stroke="#d8404b" stroke-width="1.6"/><circle cx="943.1" cy="123.6" r="2.4" fill="#fff" stroke="#d8404b" stroke-width="1.6"/><circle cx="816.9" cy="219.8" r="2.4" fill="#fff" stroke="#d8404b" stroke-width="1.6"/><circle cx="795.6" cy="269.7" r="2.4" fill="#fff" stroke="#d8404b" stroke-width="1.6"/><circle cx="900.8" cy="269.7" r="2.4" fill="#fff" stroke="#d8404b" stroke-width="1.6"/><circle cx="713.0" cy="315.6" r="2.4" fill="#fff" stroke="#d8404b" stroke-width="1.6"/><circle cx="778.6" cy="325.6" r="2.4" fill="#fff" stroke="#d8404b" stroke-width="1.6"/><circle cx="922.7" cy="312.0" r="2.4" fill="#fff" stroke="#d8404b" stroke-width="1.6"/><circle cx="979.1" cy="347.8" r="2.4" fill="#fff" stroke="#d8404b" stroke-width="1.6"/><circle cx="940.0" cy="384.2" r="2.4" fill="#fff" stroke="#d8404b" stroke-width="1.6"/><circle cx="647.8" cy="340.6" r="2.4" fill="#fff" stroke="#d8404b" stroke-width="1.6"/><circle cx="574.9" cy="346.9" r="2.4" fill="#fff" stroke="#d8404b" stroke-width="1.6"/><circle cx="734.7" cy="364.9" r="2.4" fill="#fff" stroke="#d8404b" stroke-width="1.6"/><circle cx="635.8" cy="379.9" r="2.4" fill="#fff" stroke="#d8404b" stroke-width="1.6"/><circle cx="805.6" cy="384.9" r="2.4" fill="#fff" stroke="#d8404b" stroke-width="1.6"/><circle cx="755.6" cy="394.9" r="2.4" fill="#fff" stroke="#d8404b" stroke-width="1.6"/><circle cx="551.6" cy="405.5" r="2.4" fill="#fff" stroke="#d8404b" stroke-width="1.6"/><circle cx="617.5" cy="428.8" r="2.4" fill="#fff" stroke="#d8404b" stroke-width="1.6"/><circle cx="838.5" cy="417.8" r="2.4" fill="#fff" stroke="#d8404b" stroke-width="1.6"/><circle cx="925.7" cy="429.8" r="2.4" fill="#fff" stroke="#d8404b" stroke-width="1.6"/><circle cx="504.0" cy="469.8" r="2.4" fill="#fff" stroke="#d8404b" stroke-width="1.6"/><circle cx="769.0" cy="470.8" r="2.4" fill="#fff" stroke="#d8404b" stroke-width="1.6"/><circle cx="815.6" cy="464.8" r="2.4" fill="#fff" stroke="#d8404b" stroke-width="1.6"/><circle cx="651.8" cy="475.8" r="2.4" fill="#fff" stroke="#d8404b" stroke-width="1.6"/><circle cx="916.8" cy="483.7" r="2.4" fill="#fff" stroke="#d8404b" stroke-width="1.6"/><circle cx="968.7" cy="498.0" r="2.4" fill="#fff" stroke="#d8404b" stroke-width="1.6"/><circle cx="620.8" cy="518.0" r="2.4" fill="#fff" stroke="#d8404b" stroke-width="1.6"/><circle cx="688.7" cy="517.0" r="2.4" fill="#fff" stroke="#d8404b" stroke-width="1.6"/><circle cx="770.6" cy="523.0" r="2.4" fill="#fff" stroke="#d8404b" stroke-width="1.6"/><circle cx="842.9" cy="521.4" r="2.4" fill="#fff" stroke="#d8404b" stroke-width="1.6"/><circle cx="1012.6" cy="54.8" r="2.4" fill="#fff" stroke="#d8404b" stroke-width="1.6"/><circle cx="1097.7" cy="54.3" r="2.4" fill="#fff" stroke="#d8404b" stroke-width="1.6"/><circle cx="1034.7" cy="184.7" r="2.4" fill="#fff" stroke="#d8404b" stroke-width="1.6"/><circle cx="1026.5" cy="268.9" r="2.4" fill="#fff" stroke="#d8404b" stroke-width="1.6"/><circle cx="159.8" cy="324.6" r="2.4" fill="#fff" stroke="#d8404b" stroke-width="1.6"/><circle cx="238.7" cy="320.6" r="2.4" fill="#fff" stroke="#d8404b" stroke-width="1.6"/><circle cx="262.0" cy="374.9" r="2.4" fill="#fff" stroke="#d8404b" stroke-width="1.6"/><circle cx="334.6" cy="350.6" r="2.4" fill="#fff" stroke="#d8404b" stroke-width="1.6"/><circle cx="398.8" cy="367.6" r="2.4" fill="#fff" stroke="#d8404b" stroke-width="1.6"/><circle cx="353.9" cy="376.9" r="2.4" fill="#fff" stroke="#d8404b" stroke-width="1.6"/><circle cx="482.7" cy="318.6" r="2.4" fill="#fff" stroke="#d8404b" stroke-width="1.6"/><circle cx="457.7" cy="412.8" r="2.4" fill="#fff" stroke="#d8404b" stroke-width="1.6"/><circle cx="311.6" cy="430.8" r="2.4" fill="#fff" stroke="#d8404b" stroke-width="1.6"/><circle cx="380.5" cy="442.8" r="2.4" fill="#fff" stroke="#d8404b" stroke-width="1.6"/><circle cx="274.6" cy="495.7" r="2.4" fill="#fff" stroke="#d8404b" stroke-width="1.6"/><circle cx="370.5" cy="513.7" r="2.4" fill="#fff" stroke="#d8404b" stroke-width="1.6"/><circle cx="316.6" cy="547.6" r="2.4" fill="#fff" stroke="#d8404b" stroke-width="1.6"/><circle cx="461.7" cy="534.6" r="2.4" fill="#fff" stroke="#d8404b" stroke-width="1.6"/><circle cx="357.9" cy="578.9" r="2.4" fill="#fff" stroke="#d8404b" stroke-width="1.6"/><circle cx="250.7" cy="617.5" r="2.4" fill="#fff" stroke="#d8404b" stroke-width="1.6"/><circle cx="390.5" cy="613.8" r="2.4" fill="#fff" stroke="#d8404b" stroke-width="1.6"/><circle cx="305.6" cy="649.8" r="2.4" fill="#fff" stroke="#d8404b" stroke-width="1.6"/><circle cx="352.9" cy="653.8" r="2.4" fill="#fff" stroke="#d8404b" stroke-width="1.6"/><circle cx="225.7" cy="673.8" r="2.4" fill="#fff" stroke="#d8404b" stroke-width="1.6"/><circle cx="542.6" cy="537.6" r="2.4" fill="#fff" stroke="#d8404b" stroke-width="1.6"/><circle cx="602.8" cy="570.6" r="2.4" fill="#fff" stroke="#d8404b" stroke-width="1.6"/><circle cx="691.7" cy="563.6" r="2.4" fill="#fff" stroke="#d8404b" stroke-width="1.6"/><circle cx="802.6" cy="585.5" r="2.4" fill="#fff" stroke="#d8404b" stroke-width="1.6"/><circle cx="935.1" cy="549.9" r="2.4" fill="#fff" stroke="#d8404b" stroke-width="1.6"/><circle cx="889.8" cy="605.5" r="2.4" fill="#fff" stroke="#d8404b" stroke-width="1.6"/><circle cx="605.8" cy="622.8" r="2.4" fill="#fff" stroke="#d8404b" stroke-width="1.6"/><circle cx="564.9" cy="640.8" r="2.4" fill="#fff" stroke="#d8404b" stroke-width="1.6"/><circle cx="607.8" cy="659.8" r="2.4" fill="#fff" stroke="#d8404b" stroke-width="1.6"/><circle cx="735.7" cy="666.8" r="2.4" fill="#fff" stroke="#d8404b" stroke-width="1.6"/><circle cx="827.9" cy="648.8" r="2.4" fill="#fff" stroke="#d8404b" stroke-width="1.6"/><circle cx="885.5" cy="692.4" r="2.4" fill="#fff" stroke="#d8404b" stroke-width="1.6"/><circle cx="648.8" cy="710.7" r="2.4" fill="#fff" stroke="#d8404b" stroke-width="1.6"/><circle cx="832.9" cy="715.7" r="2.4" fill="#fff" stroke="#d8404b" stroke-width="1.6"/><circle cx="944.7" cy="726.0" r="2.4" fill="#fff" stroke="#d8404b" stroke-width="1.6"/><circle cx="527.6" cy="723.7" r="2.4" fill="#fff" stroke="#d8404b" stroke-width="1.6"/><circle cx="975.9" cy="598.9" r="2.4" fill="#fff" stroke="#d8404b" stroke-width="1.6"/><circle cx="995.8" cy="638.0" r="2.4" fill="#fff" stroke="#d8404b" stroke-width="1.6"/><circle cx="1031.8" cy="684.0" r="2.4" fill="#fff" stroke="#d8404b" stroke-width="1.6"/><circle cx="269.0" cy="711.4" r="2.4" fill="#fff" stroke="#d8404b" stroke-width="1.6"/><circle cx="583.9" cy="727.3" r="2.4" fill="#fff" stroke="#d8404b" stroke-width="1.6"/><circle cx="334.6" cy="210.1" r="4.6" fill="#fff" stroke="#d8404b" stroke-width="1"/><circle cx="334.6" cy="210.1" r="2.2" fill="#d8404b"/><circle cx="585.9" cy="69.3" r="4.6" fill="#fff" stroke="#d8404b" stroke-width="1"/><circle cx="585.9" cy="69.3" r="2.2" fill="#d8404b"/><circle cx="621.8" cy="244.4" r="4.6" fill="#fff" stroke="#d8404b" stroke-width="1"/><circle cx="621.8" cy="244.4" r="2.2" fill="#d8404b"/><circle cx="712.0" cy="235.1" r="4.6" fill="#fff" stroke="#d8404b" stroke-width="1"/><circle cx="712.0" cy="235.1" r="2.2" fill="#d8404b"/><circle cx="833.5" cy="174.8" r="4.6" fill="#fff" stroke="#d8404b" stroke-width="1"/><circle cx="833.5" cy="174.8" r="2.2" fill="#d8404b"/><circle cx="829.5" cy="314.6" r="4.6" fill="#fff" stroke="#d8404b" stroke-width="1"/><circle cx="829.5" cy="314.6" r="2.2" fill="#d8404b"/><circle cx="670.7" cy="421.5" r="4.6" fill="#fff" stroke="#d8404b" stroke-width="1"/><circle cx="670.7" cy="421.5" r="2.2" fill="#d8404b"/><circle cx="131.8" cy="316.6" r="4.6" fill="#fff" stroke="#d8404b" stroke-width="1"/><circle cx="131.8" cy="316.6" r="2.2" fill="#d8404b"/><circle cx="226.0" cy="347.6" r="4.6" fill="#fff" stroke="#d8404b" stroke-width="1"/><circle cx="226.0" cy="347.6" r="2.2" fill="#d8404b"/><circle cx="457.7" cy="443.5" r="4.6" fill="#fff" stroke="#d8404b" stroke-width="1"/><circle cx="457.7" cy="443.5" r="2.2" fill="#d8404b"/><circle cx="235.7" cy="646.8" r="4.6" fill="#fff" stroke="#d8404b" stroke-width="1"/><circle cx="235.7" cy="646.8" r="2.2" fill="#d8404b"/><circle cx="348.9" cy="699.7" r="4.6" fill="#fff" stroke="#d8404b" stroke-width="1"/><circle cx="348.9" cy="699.7" r="2.2" fill="#d8404b"/><circle cx="701.7" cy="645.8" r="4.6" fill="#fff" stroke="#d8404b" stroke-width="1"/><circle cx="701.7" cy="645.8" r="2.2" fill="#d8404b"/><circle cx="834.9" cy="580.2" r="4.6" fill="#fff" stroke="#d8404b" stroke-width="1"/><circle cx="834.9" cy="580.2" r="2.2" fill="#d8404b"/><circle cx="906.4" cy="567.9" r="4.6" fill="#fff" stroke="#d8404b" stroke-width="1"/><circle cx="906.4" cy="567.9" r="2.2" fill="#d8404b"/><circle cx="1027.9" cy="612.8" r="4.6" fill="#fff" stroke="#d8404b" stroke-width="1"/><circle cx="1027.9" cy="612.8" r="2.2" fill="#d8404b"/><circle cx="968.0" cy="662.9" r="4.6" fill="#fff" stroke="#d8404b" stroke-width="1"/><circle cx="968.0" cy="662.9" r="2.2" fill="#d8404b"/><polygon points="797.9,118.9 799.6,123.6 804.6,123.7 800.7,126.8 802.0,131.6 797.9,128.8 793.8,131.6 795.1,126.8 791.2,123.7 796.2,123.6" fill="#d8404b"/></svg>
<div class="l" style="left:54.7px;top:133.8px">张掖市</div>
<div class="l" style="left:134.0px;top:157.8px">金昌市</div>
<div class="l" style="left:358.0px;top:25.7px">巴彦淖尔市</div>
<div class="l" style="left:342.7px;top:90.6px">乌海市</div>
<div class="l" style="left:315.4px;top:187.8px">吴忠市</div>
<div class="l" style="left:247.8px;top:205.4px">中卫市</div>
<div class="l" style="left:482.5px;top:30.7px">包头市</div>
<div class="l" style="left:466.8px;top:93.2px">鄂尔多斯市</div>
<div class="l" style="left:655.6px;top:0.7px">乌兰察布市</div>
<div class="l" style="left:638.8px;top:65.7px">大同市</div>
<div class="l" style="left:599.8px;top:109.9px">朔州市</div>
<div class="l" style="left:637.3px;top:153.7px">忻州市</div>
<div class="l" style="left:476.3px;top:170.7px">榆林市</div>
<div class="l" style="left:540.8px;top:215.4px">吕梁市</div>
<div class="l" style="left:716.5px;top:230.4px">邢台市</div>
<div class="l" style="left:737.8px;top:137.2px">保定市</div>
<div class="l" style="left:852.0px;top:14.0px">承德市</div>
<div class="l" style="left:862.0px;top:92.2px">唐山市</div>
<div class="l" style="left:948.7px;top:62.8px">秦皇岛市</div>
<div class="l" style="left:799.7px;top:169.5px">沧州市</div>
<div class="l" style="left:778.7px;top:219.7px">德州市</div>
<div class="l" style="left:883.6px;top:219.7px">东营市</div>
<div class="l" style="left:695.5px;top:265.7px">邯郸市</div>
<div class="l" style="left:762.1px;top:275.7px">聊城市</div>
<div class="l" style="left:905.8px;top:261.7px">潍坊市</div>
<div class="l" style="left:961.9px;top:297.6px">青岛市</div>
<div class="l" style="left:922.8px;top:333.9px">日照市</div>
<div class="l" style="left:630.6px;top:290.7px">长治市</div>
<div class="l" style="left:558.0px;top:297.3px">临汾市</div>
<div class="l" style="left:694.8px;top:303.9px">濮阳市</div>
<div class="l" style="left:619.0px;top:330.6px">晋城市</div>
<div class="l" style="left:812.0px;top:323.9px">济宁市</div>
<div class="l" style="left:738.8px;top:345.6px">菏泽市</div>
<div class="l" style="left:534.7px;top:355.5px">运城市</div>
<div class="l" style="left:600.6px;top:378.8px">洛阳市</div>
<div class="l" style="left:822.0px;top:367.9px">枣庄市</div>
<div class="l" style="left:902.9px;top:379.5px">连云港市</div>
<div class="l" style="left:510.1px;top:409.5px">商洛市</div>
<div class="l" style="left:728.8px;top:410.5px">亳州市</div>
<div class="l" style="left:798.7px;top:414.8px">淮北市</div>
<div class="l" style="left:628.9px;top:425.4px">平顶山市</div>
<div class="l" style="left:899.6px;top:433.7px">淮安市</div>
<div class="l" style="left:975.0px;top:436.9px">盐城市</div>
<div class="l" style="left:604.0px;top:467.7px">南阳市</div>
<div class="l" style="left:666.2px;top:467.1px">驻马店市</div>
<div class="l" style="left:753.8px;top:472.7px">阜阳市</div>
<div class="l" style="left:825.3px;top:472.1px">蚌埠市</div>
<div class="l" style="left:996.2px;top:4.6px">锦州市</div>
<div class="l" style="left:1080.6px;top:4.1px">鞍山市</div>
<div class="l" style="left:1017.5px;top:134.8px">大连市</div>
<div class="l" style="left:1009.8px;top:218.9px">烟台市</div>
<div class="l" style="left:166.2px;top:264.0px">海东市</div>
<div class="l" style="left:245.5px;top:260.0px">白银市</div>
<div class="l" style="left:244.8px;top:324.6px">定西市</div>
<div class="l" style="left:341.0px;top:290.0px">固原市</div>
<div class="l" style="left:404.6px;top:307.3px">庆阳市</div>
<div class="l" style="left:336.4px;top:326.6px">平凉市</div>
<div class="l" style="left:465.8px;top:269.0px">延安市</div>
<div class="l" style="left:464.5px;top:352.2px">铜川市</div>
<div class="l" style="left:294.4px;top:380.5px">天水市</div>
<div class="l" style="left:363.6px;top:392.2px">宝鸡市</div>
<div class="l" style="left:257.8px;top:445.4px">陇南市</div>
<div class="l" style="left:353.7px;top:463.1px">汉中市</div>
<div class="l" style="left:277.1px;top:487.3px">广元市</div>
<div class="l" style="left:444.5px;top:484.6px">安康市</div>
<div class="l" style="left:341.0px;top:506.6px">巴中市</div>
<div class="l" style="left:257.1px;top:557.2px">德阳市</div>
<div class="l" style="left:396.9px;top:553.2px">达州市</div>
<div class="l" style="left:288.8px;top:599.5px">遂宁市</div>
<div class="l" style="left:359.3px;top:592.8px">广安市</div>
<div class="l" style="left:208.8px;top:623.8px">眉山市</div>
<div class="l" style="left:525.7px;top:487.3px">十堰市</div>
<div class="l" style="left:585.7px;top:520.6px">襄阳市</div>
<div class="l" style="left:674.9px;top:513.3px">信阳市</div>
<div class="l" style="left:763.1px;top:524.9px">六安市</div>
<div class="l" style="left:941.2px;top:489.0px">扬州市</div>
<div class="l" style="left:873.0px;top:555.5px">芜湖市</div>
<div class="l" style="left:612.3px;top:562.2px">荆门市</div>
<div class="l" style="left:548.0px;top:590.5px">宜昌市</div>
<div class="l" style="left:614.0px;top:598.8px">荆州市</div>
<div class="l" style="left:742.1px;top:605.5px">黄石市</div>
<div class="l" style="left:810.4px;top:598.8px">安庆市</div>
<div class="l" style="left:868.6px;top:642.1px">黄山市</div>
<div class="l" style="left:631.6px;top:660.4px">岳阳市</div>
<div class="l" style="left:780.4px;top:654.4px">景德镇市</div>
<div class="l" style="left:951.0px;top:664.9px">金华市</div>
<div class="l" style="left:476.8px;top:663.1px">张家界市</div>
<div class="l" style="left:959.4px;top:527.1px">无锡市</div>
<div class="l" style="left:955.8px;top:576.9px">嘉兴市</div>
<div class="l" style="left:1015.1px;top:633.8px">宁波市</div>
<div class="c" style="left:314.4px;top:161.6px">银川市</div>
<div class="c" style="left:552.1px;top:22.2px">呼和浩特市</div>
<div class="c" style="left:600.5px;top:197.2px">太原市</div>
<div class="c" style="left:685.2px;top:185.9px">石家庄市</div>
<div class="c" style="left:813.4px;top:126.0px">天津市</div>
<div class="c" style="left:809.4px;top:266.2px">济南市</div>
<div class="c" style="left:650.3px;top:372.7px">郑州市</div>
<div class="c" style="left:111.4px;top:267.8px">西宁市</div>
<div class="c" style="left:205.2px;top:299.4px">兰州市</div>
<div class="c" style="left:437.6px;top:395.0px">西安市</div>
<div class="c" style="left:215.2px;top:598.3px">成都市</div>
<div class="c" style="left:327.4px;top:651.2px;height:10.5px;overflow:hidden;padding-top:0">重庆市</div>
<div class="c" style="left:681.9px;top:597.0px">武汉市</div>
<div class="c" style="left:814.4px;top:531.7px">合肥市</div>
<div class="c" style="left:886.6px;top:519.4px">南京市</div>
<div class="c" style="left:1008.8px;top:564.0px">上海市</div>
<div class="c" style="left:948.3px;top:614.4px">杭州市</div>
<div class="c" style="left:776.8px;top:76.1px">北京市</div>
<div class="r" style="left:20.0px;top:375.5px">果洛藏族自治州</div>
<div class="r" style="left:127.6px;top:508.9px">阿坝藏族</div>
<div class="r" style="left:121.6px;top:522.9px">羌族自治州</div>
<div class="r" style="left:98.3px;top:613.8px">甘孜藏族自治州</div>
<div class="r" style="left:452.8px;top:594.8px">恩施土家族</div>
<div class="r" style="left:452.8px;top:608.8px">苗族自治州</div>
<div class="s" style="left:951.8px;top:126.5px">渤海</div>
<div class="s" style="left:1094.9px;top:364.5px">黄海</div>
<div class="s" style="left:1117.0px;top:606.2px">东海</div>
<div class="s" style="left:145.6px;top:421.5px">黄河</div>
</div><div id="wline"></div>
<svg style="position:absolute;left:0;top:0;overflow:visible" width="1541" height="751" viewBox="0 0 1541 751">
<defs>
<linearGradient id="pg" x1="0" y1="0" x2="0" y2="1"><stop offset="0" stop-color="#56c6f8"/><stop offset="0.55" stop-color="#2a90cf"/><stop offset="1" stop-color="#0f65a3"/></linearGradient>
<filter id="blur2" x="-50%" y="-50%" width="200%" height="200%"><feGaussianBlur stdDeviation="2"/></filter>
<filter id="blur1" x="-50%" y="-50%" width="200%" height="200%"><feGaussianBlur stdDeviation="1.2"/></filter>
<radialGradient id="cg" cx="0.5" cy="0.3" r="0.7"><stop offset="0" stop-color="#ffffff"/><stop offset="1" stop-color="#e6e8e8"/></radialGradient>
<linearGradient id="ccg" x1="0" y1="0" x2="0" y2="1"><stop offset="0" stop-color="#dcdcdc"/><stop offset="1" stop-color="#f4f4f4"/></linearGradient>
<g id="pin">
<path d="M0,-21 C6.2,-21 11,-16.2 11,-10 C11,-4.8 7.2,-1.8 4,1 C2,3 1.2,6 0,11 C-1.2,6 -2,3 -4,1 C-7.2,-1.8 -11,-4.8 -11,-10 C-11,-16.2 -6.2,-21 0,-21 Z" fill="url(#pg)" stroke="#1b6da6" stroke-width="0.8"/>
</g>
<g id="pinshadow">
<path d="M-13,4 C-8,-4 4,-7 14,-6 C11,2 -1,8 -13,7 Z" fill="#333" opacity="0.5" filter="url(#blur1)"/>
</g>
</defs>
<!-- pin shadows -->
<use href="#pinshadow" transform="translate(619.8,262.5) rotate(-18)"/>
<use href="#pinshadow" transform="translate(708.0,276.0) rotate(-18)"/>
<use href="#pinshadow" transform="translate(953.0,111.0) rotate(-18)"/>
<use href="#pinshadow" transform="translate(715.0,406.5) rotate(-18)"/>
<use href="#pinshadow" transform="translate(597.0,456.0) rotate(-18)"/>
<use href="#pinshadow" transform="translate(956.0,364.0) rotate(-18)"/>
<!-- pins: head center x, tip y -->
<use href="#pin" transform="translate(605.8,271)"/>
<use href="#pin" transform="translate(694,284.5)"/>
<use href="#pin" transform="translate(939,119.5)"/>
<use href="#pin" transform="translate(701,415)"/>
<use href="#pin" transform="translate(583,464.5)"/>
<use href="#pin" transform="translate(942,372.5)"/>
<!-- cluster -->
<g transform="translate(668,380.6)">
<circle r="13.5" fill="#fff" opacity="0.6"/>
<circle r="16" fill="none" stroke="#3d9bf5" stroke-opacity="0.75" stroke-width="3" stroke-dasharray="27.9 5.6" transform="rotate(100)"/>
<circle r="20" fill="none" stroke="#6ab3f7" stroke-opacity="0.55" stroke-width="3" stroke-dasharray="34.9 7" transform="rotate(100)"/>
<circle r="24" fill="none" stroke="#9fcdf8" stroke-opacity="0.45" stroke-width="3" stroke-dasharray="41.9 8.4" transform="rotate(100)"/>
<circle r="12.4" fill="#0b8bff"/>
<text x="0" y="5.5" text-anchor="middle" font-family="Liberation Sans" font-size="16" fill="#000">4</text>
</g>
<!-- compass -->
<path d="M14.4,70.8 A29,29 0 0 1 61.6,88" fill="none" stroke="#8f96a0" stroke-width="1" stroke-dasharray="1 1.3"/>
<circle cx="33.5" cy="93.5" r="25.5" fill="#000" opacity="0.45" filter="url(#blur2)"/>
<circle cx="33" cy="92" r="24.8" fill="url(#cg)"/>
<circle cx="33" cy="92" r="7.8" fill="url(#ccg)"/>
<g fill="none" stroke="#3f4a55" stroke-width="1.6">
<polyline points="27.3,78 33,72.5 38.7,78"/>
<polyline points="27.3,105.5 33,111 38.7,105.5"/>
<polyline points="19.3,86.5 13.8,92 19.3,97.5"/>
<polyline points="46.7,86.5 52.2,92 46.7,97.5"/>
</g>
<rect x="27.8" y="59.8" width="9.6" height="9.4" fill="#1f5d96"/><g stroke="#fff" stroke-width="1.1" fill="none"><path d="M31.4,61 V68.2 M29,63.6 H31.4 M28.8,67.2 L31.4,66.2 M34.2,61 V67.6 H36.6 V66.6 M34.2,64.2 L36.4,63"/></g>
<!-- zoom slider -->
<rect x="24" y="128" width="18" height="136" rx="4" fill="#000" opacity="0.3" filter="url(#blur1)"/>
<rect x="23.6" y="127" width="18.4" height="137" rx="4" fill="#fbfbfb"/>
<g stroke="#3f4a55" stroke-width="2"><line x1="29" y1="136" x2="37" y2="136"/><line x1="33" y1="132" x2="33" y2="140"/><line x1="29" y1="255" x2="37" y2="255"/></g>
<rect x="30" y="148" width="6" height="95" rx="3" fill="#c2cdd9"/>
<rect x="30" y="222" width="6" height="21" rx="3" fill="#2b8ee0"/>
<circle cx="33" cy="222" r="6.6" fill="#f4f4f4" stroke="#1a6fb5" stroke-width="1.5"/>
<!-- toggle -->
<rect x="1464" y="61" width="80" height="23" fill="#000" opacity="0.35" filter="url(#blur1)"/>
<rect x="1464.3" y="59.3" width="77" height="23.3" fill="#707070"/>
<rect x="1465" y="60" width="38.2" height="22" fill="#2894e8"/>
<rect x="1503.8" y="60" width="38" height="22" fill="#fff"/>
<text x="1484.3" y="74.6" text-anchor="middle" font-family="Liberation Sans" font-size="13" font-weight="bold" fill="#fff">地图</text>
<text x="1523.6" y="74.4" text-anchor="middle" font-family="Liberation Sans" font-size="13" fill="#222">卫星</text>
<!-- footer logo -->
<g transform="translate(3.9,704.6)">
<rect x="0" y="0" width="25" height="24.3" rx="5" fill="#e4e4e4"/>
<path d="M0,5 Q0,0 5,0 L5.5,0 L24,17 L24,19.3 Q24,24.3 19,24.3 L10,24.3 L0,14 Z" fill="#3a7cf6"/>
<path d="M10,0 L20,0 Q25,0 25,5 L25,13.5 Z" fill="#12c45e"/>
<path d="M15,24.3 L24.5,16 L25,19.3 Q25,24.3 20,24.3 Z" fill="#c9c9c9"/>
<path d="M4.5,19.5 L10,10 L13.5,13.5 Z" fill="#fff"/>
<path d="M10,10 L20.5,5 L13.5,13.5 Z" fill="#f24a1a"/>
</g>
</svg>
<div style="position:absolute;left:34.5px;top:708px;font-size:17px;line-height:17px;color:#707070;white-space:nowrap">腾讯地图</div>
<div style="position:absolute;left:112.5px;top:716px;font-size:12px;line-height:12px;color:#333;white-space:nowrap">©2020 Tencent - GS(2020)1720号 - Data© NavInfo</div>
<div style="position:absolute;left:0;top:54px;width:1px;height:676px;background:#9a9a9a"></div>

</body></html>
